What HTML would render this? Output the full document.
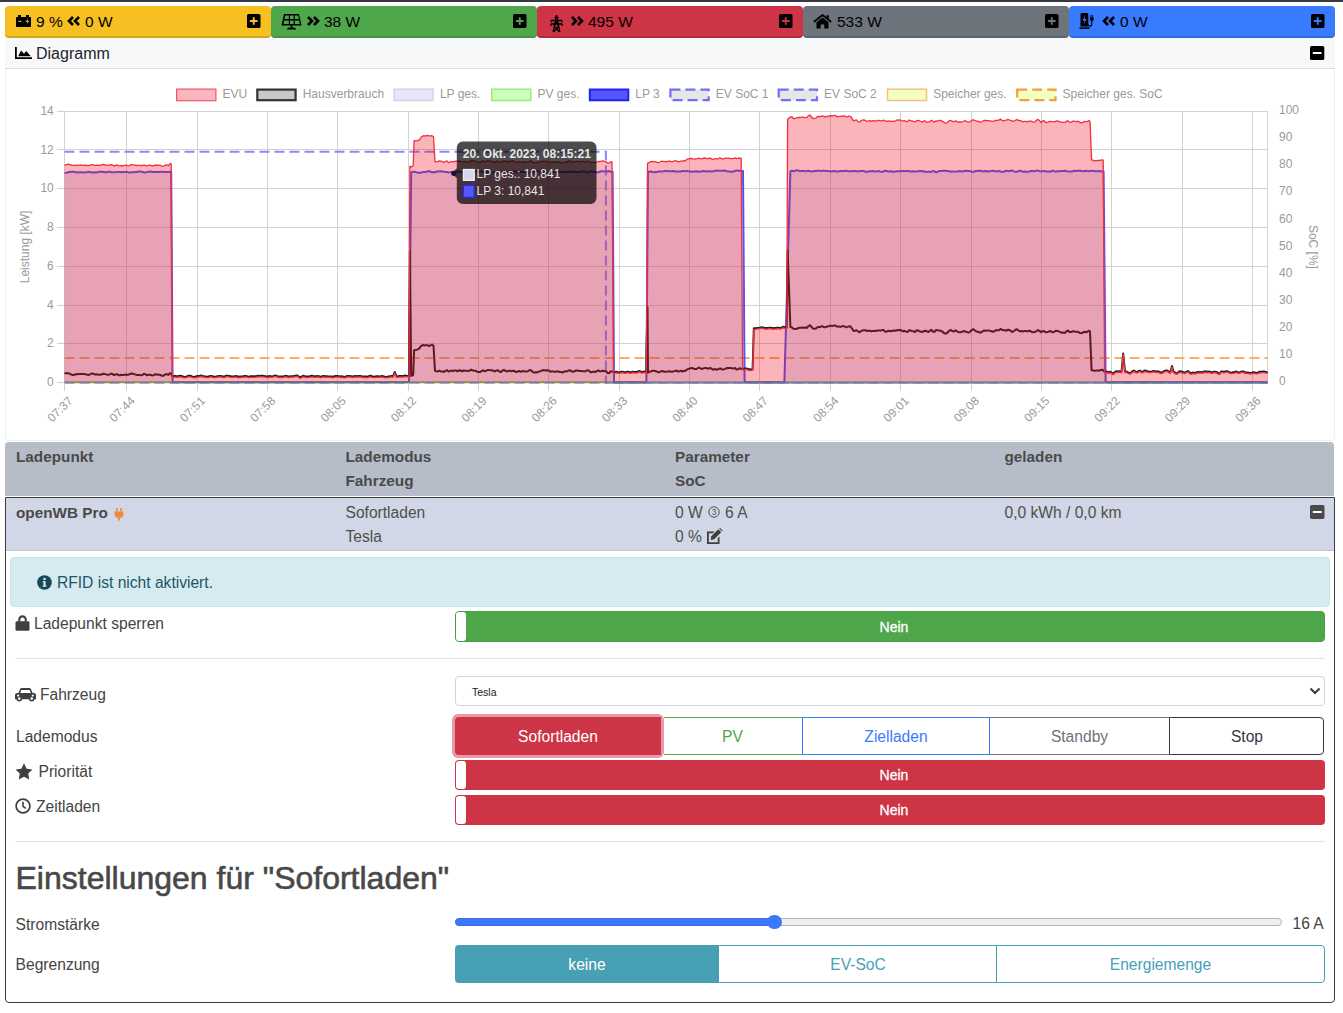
<!DOCTYPE html>
<html><head><meta charset="utf-8">
<style>
*{box-sizing:border-box;margin:0;padding:0}
html,body{width:1343px;height:1013px;overflow:hidden;background:#fff;font-family:"Liberation Sans",sans-serif;color:#212529}
.abs{position:absolute}
.topbar{position:absolute;left:0;top:0;width:1343px;height:2px;background:#343a40}
.sb{position:absolute;top:6px;height:32px;border-radius:4px;color:#000;font-size:15.5px;box-shadow:inset 0 -2px 0 rgba(0,0,0,0.13)}
.sb .t{position:absolute;top:7px;line-height:18px;white-space:nowrap}
.sb svg{position:absolute}
.card{position:absolute;left:5px;top:38px;width:1330px;height:401px;border:1px solid #e3e3e3;border-top:none;border-radius:0 0 4px 4px;background:#fff}
.cardh{position:absolute;left:5px;top:38px;width:1330px;height:31px;background:#f7f8fa;border-bottom:1px solid #dcdcdc}
.lbl{position:absolute;white-space:nowrap;font-size:15.6px;color:#444;line-height:18px}
.b{font-weight:bold;font-size:15.3px;color:#4a4a4a}
</style></head><body>
<div class="topbar"></div>
<div class="sb" style="left:5px;width:266px;background:#f6c022"></div>
<div class="sb" style="left:271px;width:266px;background:#4fa74b"></div>
<div class="sb" style="left:537px;width:266px;background:#cd3446"></div>
<div class="sb" style="left:803px;width:266px;background:#6d747c"></div>
<div class="sb" style="left:1069px;width:266px;background:#397bff"></div>
<!-- battery -->
<svg class="abs" style="left:16px;top:15px" width="16" height="12" viewBox="0 0 16 12"><path d="M2 0h3v2h5V0h3v2h1.2a0.8 0.8 0 0 1 .8.8V11.2a.8.8 0 0 1-.8.8H.8a.8.8 0 0 1-.8-.8V2.8A.8.8 0 0 1 .8 2H2z" fill="#000"/><rect x="2.2" y="5.8" width="3.3" height="1.2" fill="#c9a020"/><rect x="9.8" y="5.8" width="3.3" height="1.2" fill="#c9a020"/><rect x="10.85" y="4.6" width="1.2" height="3.6" fill="#c9a020"/></svg>
<div class="lbl" style="left:36px;top:13.1px;font-size:15.5px;color:#000">9 %</div>
<svg class="abs" style="left:67px;top:16px" width="14" height="10" viewBox="0 0 14 10"><path d="M6 1L2 5l4 4M12 1L8 5l4 4" fill="none" stroke="#000" stroke-width="2.6" stroke-linejoin="miter"/></svg>
<div class="lbl" style="left:85px;top:13.1px;font-size:15.5px;color:#000">0 W</div>
<!-- solar -->
<svg class="abs" style="left:281px;top:12.5px" width="21" height="17" viewBox="0 0 21 17"><path d="M3 1h15l2.5 11.5H0.5z" fill="#000"/><path d="M4.2 2.6h3.6v3.4H3.5zM9 2.6h3.6v3.4H9zM13.8 2.6h3.4l0.7 3.4h-4.1zM3.2 7.4h4.6v3.6H2.5zM9 7.4h3.6v3.6H9zM13.8 7.4h4.3l0.7 3.6h-5z" fill="#4fa74b"/><rect x="9.7" y="12" width="1.6" height="2.5" fill="#000"/><path d="M6 16.5a4.5 2.2 0 0 1 9 0z" fill="#000"/></svg>
<svg class="abs" style="left:306px;top:16px" width="14" height="10" viewBox="0 0 14 10"><path d="M2 1l4 4-4 4M8 1l4 4-4 4" fill="none" stroke="#000" stroke-width="2.6"/></svg>
<div class="lbl" style="left:324px;top:13.1px;font-size:15.5px;color:#000">38 W</div>
<!-- tower -->
<svg class="abs" style="left:550px;top:14px" width="13" height="19" viewBox="0 0 13 19"><path d="M6.5 1L3.2 18M6.5 1l3.3 17M1 6.5h11M0.8 10h11.4M4.6 6.5l4.2 5.5M8.4 6.5L4.2 12M4.2 12l5.2 6M8.8 12l-5.2 6M4.5 3.5h4" fill="none" stroke="#000" stroke-width="1.3"/><path d="M1 6.5v2M12 6.5v2M0.8 10v2M12.2 10v2" stroke="#000" stroke-width="1.1"/></svg>
<svg class="abs" style="left:570px;top:16px" width="14" height="10" viewBox="0 0 14 10"><path d="M2 1l4 4-4 4M8 1l4 4-4 4" fill="none" stroke="#000" stroke-width="2.6"/></svg>
<div class="lbl" style="left:588px;top:13.1px;font-size:15.5px;color:#000">495 W</div>
<!-- house -->
<svg class="abs" style="left:813px;top:13.5px" width="19" height="15" viewBox="0 0 19 15"><path d="M0.8 8L9.5 1l8.7 7" fill="none" stroke="#000" stroke-width="1.8"/><path d="M13.5 1.2h2.2v4.3l-2.2-1.8z" fill="#000"/><path d="M3.5 8.2L9.5 3.4l6 4.8V14.5h-4.2v-4h-3.6v4H3.5z" fill="#000"/></svg>
<div class="lbl" style="left:837px;top:13.1px;font-size:15.5px;color:#000">533 W</div>
<!-- charging station -->
<svg class="abs" style="left:1079px;top:13px" width="19" height="16" viewBox="0 0 19 16"><path d="M1.5 1.3a1.3 1.3 0 0 1 1.3-1.3h5.2a1.3 1.3 0 0 1 1.3 1.3V13.5H1.5z" fill="#000"/><rect x="0.5" y="14.3" width="10" height="1.6" fill="#000"/><path d="M6.2 2.2L3.4 7.4h2.2l-1 4 3-5.4H5.4z" fill="#397bff"/><path d="M9.3 11.5c0 2.2 3.5 2.2 3.5 0V8" fill="none" stroke="#000" stroke-width="1.1"/><path d="M11 4.2h3.6v2.2a1.8 1.8 0 0 1-3.6 0z" fill="#000"/><rect x="11.5" y="2" width="0.9" height="2.3" fill="#000"/><rect x="13.2" y="2" width="0.9" height="2.3" fill="#000"/></svg>
<svg class="abs" style="left:1102px;top:16px" width="14" height="10" viewBox="0 0 14 10"><path d="M6 1L2 5l4 4M12 1L8 5l4 4" fill="none" stroke="#000" stroke-width="2.6"/></svg>
<div class="lbl" style="left:1120px;top:13.1px;font-size:15.5px;color:#000">0 W</div>
<!-- plus squares -->
<svg class="abs" style="left:246.5px;top:14px" width="14" height="14" viewBox="0 0 14 14"><rect x="0" y="0" width="13.5" height="14" rx="1.6" fill="#000"/><path d="M6.75 3.2v7.6M2.9 7h7.7" stroke="#f6c022" stroke-width="1.9"/></svg>
<svg class="abs" style="left:512.5px;top:14px" width="14" height="14" viewBox="0 0 14 14"><rect x="0" y="0" width="13.5" height="14" rx="1.6" fill="#000"/><path d="M6.75 3.2v7.6M2.9 7h7.7" stroke="#4fa74b" stroke-width="1.9"/></svg>
<svg class="abs" style="left:778.5px;top:14px" width="14" height="14" viewBox="0 0 14 14"><rect x="0" y="0" width="13.5" height="14" rx="1.6" fill="#000"/><path d="M6.75 3.2v7.6M2.9 7h7.7" stroke="#cd3446" stroke-width="1.9"/></svg>
<svg class="abs" style="left:1044.5px;top:14px" width="14" height="14" viewBox="0 0 14 14"><rect x="0" y="0" width="13.5" height="14" rx="1.6" fill="#000"/><path d="M6.75 3.2v7.6M2.9 7h7.7" stroke="#6d747c" stroke-width="1.9"/></svg>
<svg class="abs" style="left:1310.5px;top:14px" width="14" height="14" viewBox="0 0 14 14"><rect x="0" y="0" width="13.5" height="14" rx="1.6" fill="#000"/><path d="M6.75 3.2v7.6M2.9 7h7.7" stroke="#397bff" stroke-width="1.9"/></svg>
<div class="abs" style="left:5px;top:38px;width:1330px;height:403px;border:1px solid #eef0f2;border-top:none;border-radius:0 0 4px 4px;background:#fff"></div>
<div class="abs" style="left:5px;top:38px;width:1330px;height:31px;background:#f7f8fa;border-bottom:1px solid #dadcde"></div>
<svg class="abs" style="left:15px;top:47px" width="17" height="12" viewBox="0 0 17 12"><path d="M0 0h1.8v10.2H17V12H0z" fill="#000"/><path d="M3.2 9.2L6 3.5l3 3.2 2.2-2.8L15.8 9.2z" fill="#000"/></svg>
<div class="lbl" style="left:36px;top:44.5px;font-size:16px;color:#212529">Diagramm</div>
<svg class="abs" style="left:1310px;top:46px" width="15" height="14" viewBox="0 0 15 14"><rect x="0" y="0" width="14.3" height="14" rx="1.6" fill="#000"/><rect x="2.8" y="6" width="8.7" height="2" fill="#fff"/></svg>
<svg class="abs" style="left:0;top:0" width="1343" height="440" viewBox="0 0 1343 440" font-family="Liberation Sans, sans-serif"><g shape-rendering="crispEdges"><rect x="57" y="111" width="1210.6" height="1" fill="#d2d2d2"/><rect x="57" y="149" width="1210.6" height="1" fill="#d2d2d2"/><rect x="57" y="188" width="1210.6" height="1" fill="#d2d2d2"/><rect x="57" y="227" width="1210.6" height="1" fill="#d2d2d2"/><rect x="57" y="266" width="1210.6" height="1" fill="#d2d2d2"/><rect x="57" y="305" width="1210.6" height="1" fill="#d2d2d2"/><rect x="57" y="343" width="1210.6" height="1" fill="#d2d2d2"/><rect x="57" y="382" width="1210.6" height="1" fill="#d2d2d2"/><line x1="64" y1="111.0" x2="64" y2="391" stroke="#d2d2d2" stroke-width="1"/><line x1="126" y1="111.0" x2="126" y2="391" stroke="#d2d2d2" stroke-width="1"/><line x1="197" y1="111.0" x2="197" y2="391" stroke="#d2d2d2" stroke-width="1"/><line x1="267" y1="111.0" x2="267" y2="391" stroke="#d2d2d2" stroke-width="1"/><line x1="337" y1="111.0" x2="337" y2="391" stroke="#d2d2d2" stroke-width="1"/><line x1="408" y1="111.0" x2="408" y2="391" stroke="#d2d2d2" stroke-width="1"/><line x1="478" y1="111.0" x2="478" y2="391" stroke="#d2d2d2" stroke-width="1"/><line x1="548" y1="111.0" x2="548" y2="391" stroke="#d2d2d2" stroke-width="1"/><line x1="619" y1="111.0" x2="619" y2="391" stroke="#d2d2d2" stroke-width="1"/><line x1="689" y1="111.0" x2="689" y2="391" stroke="#d2d2d2" stroke-width="1"/><line x1="759" y1="111.0" x2="759" y2="391" stroke="#d2d2d2" stroke-width="1"/><line x1="830" y1="111.0" x2="830" y2="391" stroke="#d2d2d2" stroke-width="1"/><line x1="900" y1="111.0" x2="900" y2="391" stroke="#d2d2d2" stroke-width="1"/><line x1="971" y1="111.0" x2="971" y2="391" stroke="#d2d2d2" stroke-width="1"/><line x1="1041" y1="111.0" x2="1041" y2="391" stroke="#d2d2d2" stroke-width="1"/><line x1="1111" y1="111.0" x2="1111" y2="391" stroke="#d2d2d2" stroke-width="1"/><line x1="1182" y1="111.0" x2="1182" y2="391" stroke="#d2d2d2" stroke-width="1"/><line x1="1252" y1="111.0" x2="1252" y2="391" stroke="#d2d2d2" stroke-width="1"/><line x1="1267" y1="111.3" x2="1267" y2="382.3" stroke="#d2d2d2" stroke-width="1"/></g><path d="M64.5 357.9 H1267.6" stroke="#f5b060" stroke-width="2" stroke-dasharray="10 5" fill="none"/><path d="M64.5 383.0 H1267.6" stroke="#f2e6a0" stroke-width="2" fill="none"/><path d="M64.5 383.0 H1267.6" stroke="#a8a0f0" stroke-width="2" stroke-dasharray="10 5" fill="none"/><path d="M64.5 151.8 H605.9 V383.0 H1267.6" stroke="#8888ff" stroke-width="2" stroke-dasharray="10 5" fill="none"/><path d="M64.5 172.9 L66.0 172.8 L67.5 172.6 L69.0 172.0 L70.5 171.9 L72.0 171.8 L73.5 171.7 L75.0 172.1 L76.5 172.3 L78.0 172.4 L79.5 172.3 L81.0 172.3 L82.5 172.5 L84.0 172.5 L85.5 172.3 L87.0 172.2 L88.5 172.0 L90.0 172.0 L91.5 172.4 L93.0 172.4 L94.5 172.2 L96.0 172.4 L97.5 172.2 L99.0 171.8 L100.5 171.8 L102.0 171.8 L103.5 171.9 L105.0 172.2 L106.5 172.2 L108.0 171.8 L109.5 171.8 L111.0 172.3 L112.5 172.3 L114.0 172.2 L115.5 172.2 L117.0 172.1 L118.5 171.9 L120.0 171.9 L121.5 172.2 L123.0 172.1 L124.5 172.0 L126.0 171.9 L127.5 172.1 L129.0 172.6 L130.5 172.5 L132.0 172.3 L133.5 172.3 L135.0 172.1 L136.5 171.9 L138.0 171.7 L139.5 171.6 L141.0 171.6 L142.5 171.9 L144.0 172.4 L145.5 172.5 L147.0 172.1 L148.5 171.8 L150.0 171.7 L151.5 171.6 L153.0 171.9 L154.5 172.0 L156.0 172.0 L157.5 172.0 L159.0 171.9 L160.5 171.7 L162.0 171.7 L163.5 172.0 L165.0 172.1 L166.5 172.0 L168.0 172.0 L168.5 172.0 L169.5 171.8 L169.8 171.7 L171.0 171.8 L171.2 171.8 L172.4 352.2 L172.5 367.3 L172.6 382.3 L174.0 382.3 L175.5 382.3 L177.0 382.3 L178.5 382.3 L180.0 382.3 L181.5 382.3 L183.0 382.3 L184.5 382.3 L186.0 382.3 L187.5 382.3 L189.0 382.3 L190.5 382.3 L192.0 382.3 L193.5 382.3 L195.0 382.3 L196.5 382.3 L198.0 382.3 L199.5 382.3 L201.0 382.3 L202.5 382.3 L204.0 382.3 L205.5 382.3 L207.0 382.3 L208.5 382.3 L210.0 382.3 L211.5 382.3 L213.0 382.3 L214.5 382.3 L216.0 382.3 L217.5 382.3 L219.0 382.3 L220.5 382.3 L222.0 382.3 L223.5 382.3 L225.0 382.3 L226.5 382.3 L228.0 382.3 L229.5 382.3 L231.0 382.3 L232.5 382.3 L234.0 382.3 L235.5 382.3 L237.0 382.3 L238.5 382.3 L240.0 382.3 L241.5 382.3 L243.0 382.3 L244.5 382.3 L246.0 382.3 L247.5 382.3 L249.0 382.3 L250.5 382.3 L252.0 382.3 L253.5 382.3 L255.0 382.3 L256.5 382.3 L258.0 382.3 L259.5 382.3 L261.0 382.3 L262.5 382.3 L264.0 382.3 L265.5 382.3 L267.0 382.3 L268.5 382.3 L270.0 382.3 L271.5 382.3 L273.0 382.3 L274.5 382.3 L276.0 382.3 L277.5 382.3 L279.0 382.3 L280.5 382.3 L282.0 382.3 L283.5 382.3 L285.0 382.3 L286.5 382.3 L288.0 382.3 L289.5 382.3 L291.0 382.3 L292.5 382.3 L294.0 382.3 L295.5 382.3 L297.0 382.3 L298.5 382.3 L300.0 382.3 L301.5 382.3 L303.0 382.3 L304.5 382.3 L306.0 382.3 L307.5 382.3 L309.0 382.3 L310.5 382.3 L312.0 382.3 L313.5 382.3 L315.0 382.3 L316.5 382.3 L318.0 382.3 L319.5 382.3 L321.0 382.3 L322.5 382.3 L324.0 382.3 L325.5 382.3 L327.0 382.3 L328.5 382.3 L330.0 382.3 L331.5 382.3 L333.0 382.3 L334.5 382.3 L336.0 382.3 L337.5 382.3 L339.0 382.3 L340.5 382.3 L342.0 382.3 L343.5 382.3 L345.0 382.3 L346.5 382.3 L348.0 382.3 L349.5 382.3 L351.0 382.3 L352.5 382.3 L354.0 382.3 L355.5 382.3 L357.0 382.3 L358.5 382.3 L360.0 382.3 L361.5 382.3 L363.0 382.3 L364.5 382.3 L366.0 382.3 L367.5 382.3 L369.0 382.3 L370.5 382.3 L372.0 382.3 L373.5 382.3 L375.0 382.3 L376.5 382.3 L378.0 382.3 L379.5 382.3 L381.0 382.3 L382.5 382.3 L384.0 382.3 L385.5 382.3 L387.0 382.3 L388.5 382.3 L390.0 382.3 L391.5 382.3 L393.0 382.3 L394.5 382.3 L394.7 382.3 L396.0 382.3 L396.4 382.3 L397.5 382.3 L399.0 382.3 L400.5 382.3 L402.0 382.3 L403.5 382.3 L405.0 382.3 L406.5 382.3 L408.0 382.3 L409.0 382.3 L409.5 334.5 L409.9 296.4 L411.0 191.3 L411.2 172.3 L412.5 172.1 L413.2 171.9 L414.0 171.6 L414.1 171.7 L415.5 172.0 L417.0 172.4 L418.5 172.7 L419.5 172.9 L420.0 172.8 L421.0 172.6 L421.5 172.5 L423.0 172.1 L423.5 172.1 L424.5 171.9 L426.0 172.0 L427.5 171.5 L429.0 171.0 L430.5 171.8 L432.0 172.4 L433.5 172.1 L435.0 172.3 L436.5 171.8 L438.0 171.3 L439.5 171.5 L441.0 171.2 L442.5 171.4 L444.0 171.9 L445.5 171.9 L447.0 172.0 L448.5 172.4 L450.0 172.3 L451.5 172.1 L453.0 172.0 L454.5 172.3 L456.0 172.0 L457.5 171.4 L459.0 171.8 L460.5 172.0 L462.0 172.1 L463.5 172.3 L465.0 172.1 L466.5 172.4 L468.0 172.4 L469.5 172.2 L471.0 172.2 L472.5 171.5 L474.0 171.4 L475.5 171.8 L477.0 171.6 L478.5 171.5 L480.0 171.5 L481.5 171.6 L483.0 171.9 L484.5 171.9 L486.0 172.0 L487.5 172.1 L489.0 172.0 L490.5 172.3 L492.0 172.5 L493.5 172.2 L495.0 172.3 L496.5 172.3 L498.0 172.1 L499.5 171.8 L501.0 171.4 L502.5 171.7 L504.0 172.2 L505.5 171.9 L507.0 172.0 L508.5 172.0 L510.0 171.6 L511.5 171.4 L513.0 171.4 L514.5 171.7 L516.0 171.5 L517.5 171.8 L519.0 172.1 L520.5 171.8 L522.0 172.1 L523.5 172.0 L525.0 171.8 L526.5 172.1 L528.0 172.4 L529.5 172.6 L531.0 171.8 L532.5 171.5 L534.0 171.7 L535.5 171.6 L537.0 171.5 L538.5 171.6 L540.0 171.9 L541.5 172.2 L543.0 172.3 L544.5 172.4 L546.0 172.4 L547.5 172.4 L549.0 172.4 L550.5 171.8 L552.0 171.6 L553.5 171.9 L555.0 172.1 L556.5 172.0 L558.0 171.7 L559.5 171.6 L561.0 171.8 L562.5 171.7 L564.0 172.1 L565.5 172.1 L567.0 172.0 L568.5 171.9 L570.0 171.8 L571.5 171.8 L573.0 171.6 L574.5 171.8 L576.0 172.1 L577.5 172.1 L579.0 172.0 L580.5 171.9 L582.0 171.5 L583.5 171.4 L585.0 171.7 L586.5 172.1 L588.0 172.4 L589.5 171.9 L591.0 171.2 L592.5 171.5 L594.0 171.9 L595.5 172.1 L597.0 172.4 L598.5 172.2 L600.0 171.7 L601.5 171.2 L603.0 171.3 L604.5 171.4 L606.0 171.7 L607.5 171.4 L609.0 171.1 L610.5 171.8 L612.0 171.8 L612.6 171.7 L613.5 307.1 L614.0 382.3 L615.0 382.3 L616.5 382.3 L618.0 382.3 L619.5 382.3 L621.0 382.3 L622.5 382.3 L624.0 382.3 L625.5 382.3 L627.0 382.3 L628.5 382.3 L630.0 382.3 L631.5 382.3 L633.0 382.3 L634.5 382.3 L636.0 382.3 L637.5 382.3 L639.0 382.3 L640.5 382.3 L642.0 382.3 L643.5 382.3 L645.0 382.3 L646.3 382.3 L646.4 382.3 L646.5 369.1 L647.5 237.4 L648.0 171.8 L649.5 171.8 L651.0 171.5 L652.5 172.0 L654.0 172.2 L655.5 172.0 L657.0 172.0 L658.5 171.5 L660.0 171.4 L661.5 171.5 L663.0 171.4 L664.5 171.1 L666.0 171.1 L667.5 171.3 L669.0 171.1 L670.5 171.2 L672.0 171.2 L673.5 171.1 L675.0 171.2 L676.5 171.7 L678.0 171.5 L679.5 171.6 L681.0 171.6 L682.5 170.9 L684.0 171.1 L685.5 171.2 L687.0 171.0 L687.5 171.1 L688.5 171.3 L690.0 171.4 L691.5 171.6 L693.0 171.9 L694.5 171.5 L696.0 171.2 L697.5 171.5 L699.0 171.9 L700.5 171.5 L702.0 171.3 L703.5 171.0 L705.0 171.2 L706.5 171.5 L708.0 171.2 L709.5 171.2 L711.0 171.5 L712.5 171.4 L714.0 171.1 L715.5 170.7 L717.0 170.6 L718.5 170.8 L720.0 170.8 L721.5 170.8 L723.0 170.8 L724.5 170.5 L726.0 170.9 L727.5 171.4 L729.0 171.6 L730.5 171.8 L732.0 171.7 L733.5 171.4 L735.0 171.1 L736.5 170.4 L738.0 170.6 L739.5 171.1 L741.0 170.9 L741.2 170.9 L742.5 171.0 L742.6 170.9 L743.0 171.0 L744.0 303.1 L744.6 382.3 L745.5 382.3 L747.0 382.3 L748.5 382.3 L750.0 382.3 L751.5 382.3 L752.6 382.3 L753.0 382.3 L753.8 382.3 L754.5 382.3 L756.0 382.3 L757.5 382.3 L759.0 382.3 L760.5 382.3 L762.0 382.3 L763.5 382.3 L765.0 382.3 L766.5 382.3 L768.0 382.3 L769.5 382.3 L771.0 382.3 L772.5 382.3 L774.0 382.3 L775.5 382.3 L777.0 382.3 L778.5 382.3 L780.0 382.3 L781.5 382.3 L783.0 382.3 L784.4 382.3 L784.5 378.8 L786.0 326.0 L786.8 297.9 L787.5 273.2 L787.6 269.7 L789.0 220.5 L790.4 171.3 L790.5 171.2 L792.0 170.8 L793.5 171.2 L795.0 170.9 L796.5 170.2 L798.0 170.6 L799.5 170.9 L801.0 170.9 L802.5 170.9 L804.0 171.1 L805.5 171.4 L807.0 170.9 L808.5 170.8 L810.0 171.2 L811.5 171.4 L813.0 171.2 L814.5 171.0 L816.0 170.9 L817.5 170.7 L819.0 170.7 L820.5 171.1 L822.0 171.0 L823.5 170.6 L825.0 170.9 L826.5 171.0 L828.0 171.0 L829.5 171.3 L831.0 171.4 L832.5 171.2 L834.0 171.1 L835.5 171.2 L837.0 171.5 L838.0 171.4 L838.5 171.5 L840.0 171.0 L841.5 171.0 L843.0 171.3 L844.5 170.9 L846.0 170.8 L847.5 171.1 L849.0 171.3 L850.5 171.3 L851.0 171.0 L852.0 171.2 L853.5 171.2 L855.0 171.1 L856.5 171.1 L858.0 171.5 L859.5 171.2 L861.0 171.0 L862.5 171.0 L864.0 171.1 L865.5 171.7 L867.0 171.8 L868.5 171.4 L870.0 171.2 L871.5 171.2 L873.0 171.1 L874.5 171.4 L876.0 171.4 L877.5 171.2 L879.0 171.1 L880.5 171.6 L882.0 172.0 L883.5 171.3 L885.0 170.8 L886.5 171.0 L888.0 171.5 L889.5 171.5 L891.0 171.3 L892.5 171.6 L894.0 171.9 L895.5 171.4 L897.0 171.2 L898.5 171.3 L900.0 171.3 L901.5 171.2 L903.0 171.1 L904.5 171.1 L906.0 171.3 L907.5 171.0 L909.0 171.1 L910.5 171.5 L912.0 171.4 L913.5 171.3 L915.0 171.4 L916.5 171.6 L918.0 171.3 L919.5 170.9 L921.0 171.1 L922.5 171.4 L924.0 171.2 L925.5 171.8 L927.0 172.0 L928.5 171.6 L930.0 171.9 L931.5 171.7 L933.0 171.0 L934.5 171.4 L936.0 172.3 L937.5 172.0 L939.0 171.0 L940.5 170.9 L942.0 171.0 L943.5 170.7 L945.0 170.7 L946.5 171.0 L948.0 171.1 L949.5 171.2 L951.0 171.8 L952.5 171.5 L954.0 171.6 L955.5 171.7 L957.0 171.5 L958.5 171.2 L960.0 170.9 L961.5 171.5 L963.0 171.5 L964.5 170.9 L966.0 170.8 L967.5 171.0 L969.0 170.9 L970.5 171.2 L972.0 171.9 L973.5 171.8 L975.0 171.2 L976.5 170.9 L978.0 170.9 L979.5 170.6 L981.0 171.0 L982.5 171.4 L984.0 171.2 L985.5 171.1 L987.0 171.3 L988.5 171.6 L990.0 171.2 L991.5 171.1 L993.0 170.8 L994.5 171.0 L996.0 171.5 L997.5 171.3 L999.0 171.0 L1000.5 171.5 L1002.0 171.8 L1003.5 171.9 L1005.0 171.3 L1006.5 170.8 L1008.0 171.0 L1009.5 171.2 L1011.0 170.7 L1012.5 170.6 L1014.0 171.4 L1015.5 171.7 L1017.0 171.8 L1018.5 171.2 L1020.0 170.6 L1021.5 171.3 L1023.0 171.7 L1024.5 171.5 L1026.0 171.7 L1027.5 171.8 L1029.0 171.6 L1030.5 171.3 L1032.0 170.8 L1033.5 171.2 L1035.0 171.3 L1036.5 170.6 L1038.0 170.6 L1039.5 171.2 L1041.0 171.5 L1042.5 171.1 L1044.0 170.9 L1045.5 171.4 L1047.0 171.5 L1048.5 171.6 L1050.0 171.7 L1051.5 171.1 L1053.0 170.6 L1054.5 171.4 L1056.0 171.7 L1057.5 171.1 L1059.0 171.3 L1060.5 171.3 L1062.0 170.9 L1063.5 170.9 L1065.0 170.8 L1066.5 171.1 L1068.0 171.6 L1069.5 171.4 L1071.0 171.6 L1072.5 171.4 L1074.0 170.8 L1075.5 171.0 L1077.0 171.0 L1078.5 170.6 L1080.0 170.7 L1081.5 171.0 L1083.0 171.2 L1084.5 170.9 L1086.0 170.7 L1087.5 171.1 L1089.0 171.2 L1090.0 171.1 L1090.5 171.1 L1091.6 170.9 L1092.0 170.8 L1093.5 171.0 L1095.0 171.3 L1096.5 171.3 L1098.0 171.3 L1099.5 171.1 L1101.0 171.4 L1102.5 171.5 L1103.2 171.4 L1103.6 171.2 L1104.0 213.4 L1104.6 276.8 L1105.5 371.7 L1105.6 382.3 L1107.0 382.3 L1108.5 382.3 L1110.0 382.3 L1111.5 382.3 L1113.0 382.3 L1114.5 382.3 L1116.0 382.3 L1117.5 382.3 L1119.0 382.3 L1120.5 382.3 L1121.5 382.3 L1122.0 382.3 L1123.2 382.3 L1123.5 382.3 L1125.0 382.3 L1126.5 382.3 L1128.0 382.3 L1129.5 382.3 L1131.0 382.3 L1132.5 382.3 L1134.0 382.3 L1135.5 382.3 L1137.0 382.3 L1138.5 382.3 L1140.0 382.3 L1141.5 382.3 L1143.0 382.3 L1144.5 382.3 L1146.0 382.3 L1147.5 382.3 L1149.0 382.3 L1150.5 382.3 L1152.0 382.3 L1153.5 382.3 L1155.0 382.3 L1156.5 382.3 L1158.0 382.3 L1159.5 382.3 L1161.0 382.3 L1162.5 382.3 L1164.0 382.3 L1165.5 382.3 L1167.0 382.3 L1168.5 382.3 L1170.0 382.3 L1170.5 382.3 L1171.5 382.3 L1172.0 382.3 L1173.0 382.3 L1173.5 382.3 L1174.5 382.3 L1176.0 382.3 L1177.5 382.3 L1179.0 382.3 L1180.5 382.3 L1182.0 382.3 L1183.5 382.3 L1185.0 382.3 L1186.5 382.3 L1188.0 382.3 L1189.5 382.3 L1191.0 382.3 L1192.5 382.3 L1194.0 382.3 L1195.5 382.3 L1197.0 382.3 L1198.5 382.3 L1200.0 382.3 L1201.5 382.3 L1203.0 382.3 L1204.5 382.3 L1206.0 382.3 L1207.5 382.3 L1209.0 382.3 L1210.5 382.3 L1212.0 382.3 L1213.5 382.3 L1215.0 382.3 L1216.5 382.3 L1218.0 382.3 L1219.5 382.3 L1221.0 382.3 L1222.5 382.3 L1224.0 382.3 L1225.5 382.3 L1227.0 382.3 L1228.5 382.3 L1230.0 382.3 L1231.5 382.3 L1233.0 382.3 L1234.5 382.3 L1236.0 382.3 L1237.5 382.3 L1239.0 382.3 L1240.5 382.3 L1242.0 382.3 L1243.5 382.3 L1245.0 382.3 L1246.5 382.3 L1248.0 382.3 L1249.5 382.3 L1251.0 382.3 L1252.5 382.3 L1254.0 382.3 L1255.5 382.3 L1257.0 382.3 L1258.5 382.3 L1260.0 382.3 L1261.5 382.3 L1263.0 382.3 L1264.5 382.3 L1266.0 382.3 L1267.5 382.3 L1267.6 382.3" stroke="#5050f0" stroke-width="2" fill="none" stroke-linejoin="round"/><path d="M64.5 382.2 H1267.6" stroke="#4a9a3a" stroke-width="1.3" fill="none"/><path d="M64.5 172.9 L66.0 172.8 L67.5 172.6 L69.0 172.0 L70.5 171.9 L72.0 171.8 L73.5 171.7 L75.0 172.1 L76.5 172.3 L78.0 172.4 L79.5 172.3 L81.0 172.3 L82.5 172.5 L84.0 172.5 L85.5 172.3 L87.0 172.2 L88.5 172.0 L90.0 172.0 L91.5 172.4 L93.0 172.4 L94.5 172.2 L96.0 172.4 L97.5 172.2 L99.0 171.8 L100.5 171.8 L102.0 171.8 L103.5 171.9 L105.0 172.2 L106.5 172.2 L108.0 171.8 L109.5 171.8 L111.0 172.3 L112.5 172.3 L114.0 172.2 L115.5 172.2 L117.0 172.1 L118.5 171.9 L120.0 171.9 L121.5 172.2 L123.0 172.1 L124.5 172.0 L126.0 171.9 L127.5 172.1 L129.0 172.6 L130.5 172.5 L132.0 172.3 L133.5 172.3 L135.0 172.1 L136.5 171.9 L138.0 171.7 L139.5 171.6 L141.0 171.6 L142.5 171.9 L144.0 172.4 L145.5 172.5 L147.0 172.1 L148.5 171.8 L150.0 171.7 L151.5 171.6 L153.0 171.9 L154.5 172.0 L156.0 172.0 L157.5 172.0 L159.0 171.9 L160.5 171.7 L162.0 171.7 L163.5 172.0 L165.0 172.1 L166.5 172.0 L168.0 172.0 L168.5 172.0 L169.5 171.8 L169.8 171.7 L171.0 171.8 L171.2 171.8 L172.4 352.2 L172.5 367.3 L172.6 382.3 L174.0 382.3 L175.5 382.3 L177.0 382.3 L178.5 382.3 L180.0 382.3 L181.5 382.3 L183.0 382.3 L184.5 382.3 L186.0 382.3 L187.5 382.3 L189.0 382.3 L190.5 382.3 L192.0 382.3 L193.5 382.3 L195.0 382.3 L196.5 382.3 L198.0 382.3 L199.5 382.3 L201.0 382.3 L202.5 382.3 L204.0 382.3 L205.5 382.3 L207.0 382.3 L208.5 382.3 L210.0 382.3 L211.5 382.3 L213.0 382.3 L214.5 382.3 L216.0 382.3 L217.5 382.3 L219.0 382.3 L220.5 382.3 L222.0 382.3 L223.5 382.3 L225.0 382.3 L226.5 382.3 L228.0 382.3 L229.5 382.3 L231.0 382.3 L232.5 382.3 L234.0 382.3 L235.5 382.3 L237.0 382.3 L238.5 382.3 L240.0 382.3 L241.5 382.3 L243.0 382.3 L244.5 382.3 L246.0 382.3 L247.5 382.3 L249.0 382.3 L250.5 382.3 L252.0 382.3 L253.5 382.3 L255.0 382.3 L256.5 382.3 L258.0 382.3 L259.5 382.3 L261.0 382.3 L262.5 382.3 L264.0 382.3 L265.5 382.3 L267.0 382.3 L268.5 382.3 L270.0 382.3 L271.5 382.3 L273.0 382.3 L274.5 382.3 L276.0 382.3 L277.5 382.3 L279.0 382.3 L280.5 382.3 L282.0 382.3 L283.5 382.3 L285.0 382.3 L286.5 382.3 L288.0 382.3 L289.5 382.3 L291.0 382.3 L292.5 382.3 L294.0 382.3 L295.5 382.3 L297.0 382.3 L298.5 382.3 L300.0 382.3 L301.5 382.3 L303.0 382.3 L304.5 382.3 L306.0 382.3 L307.5 382.3 L309.0 382.3 L310.5 382.3 L312.0 382.3 L313.5 382.3 L315.0 382.3 L316.5 382.3 L318.0 382.3 L319.5 382.3 L321.0 382.3 L322.5 382.3 L324.0 382.3 L325.5 382.3 L327.0 382.3 L328.5 382.3 L330.0 382.3 L331.5 382.3 L333.0 382.3 L334.5 382.3 L336.0 382.3 L337.5 382.3 L339.0 382.3 L340.5 382.3 L342.0 382.3 L343.5 382.3 L345.0 382.3 L346.5 382.3 L348.0 382.3 L349.5 382.3 L351.0 382.3 L352.5 382.3 L354.0 382.3 L355.5 382.3 L357.0 382.3 L358.5 382.3 L360.0 382.3 L361.5 382.3 L363.0 382.3 L364.5 382.3 L366.0 382.3 L367.5 382.3 L369.0 382.3 L370.5 382.3 L372.0 382.3 L373.5 382.3 L375.0 382.3 L376.5 382.3 L378.0 382.3 L379.5 382.3 L381.0 382.3 L382.5 382.3 L384.0 382.3 L385.5 382.3 L387.0 382.3 L388.5 382.3 L390.0 382.3 L391.5 382.3 L393.0 382.3 L394.5 382.3 L394.7 382.3 L396.0 382.3 L396.4 382.3 L397.5 382.3 L399.0 382.3 L400.5 382.3 L402.0 382.3 L403.5 382.3 L405.0 382.3 L406.5 382.3 L408.0 382.3 L409.0 382.3 L409.5 334.5 L409.9 296.4 L411.0 191.3 L411.2 172.3 L412.5 172.1 L413.2 171.9 L414.0 171.6 L414.1 171.7 L415.5 172.0 L417.0 172.4 L418.5 172.7 L419.5 172.9 L420.0 172.8 L421.0 172.6 L421.5 172.5 L423.0 172.1 L423.5 172.1 L424.5 171.9 L426.0 172.0 L427.5 171.5 L429.0 171.0 L430.5 171.8 L432.0 172.4 L433.5 172.1 L435.0 172.3 L436.5 171.8 L438.0 171.3 L439.5 171.5 L441.0 171.2 L442.5 171.4 L444.0 171.9 L445.5 171.9 L447.0 172.0 L448.5 172.4 L450.0 172.3 L451.5 172.1 L453.0 172.0 L454.5 172.3 L456.0 172.0 L457.5 171.4 L459.0 171.8 L460.5 172.0 L462.0 172.1 L463.5 172.3 L465.0 172.1 L466.5 172.4 L468.0 172.4 L469.5 172.2 L471.0 172.2 L472.5 171.5 L474.0 171.4 L475.5 171.8 L477.0 171.6 L478.5 171.5 L480.0 171.5 L481.5 171.6 L483.0 171.9 L484.5 171.9 L486.0 172.0 L487.5 172.1 L489.0 172.0 L490.5 172.3 L492.0 172.5 L493.5 172.2 L495.0 172.3 L496.5 172.3 L498.0 172.1 L499.5 171.8 L501.0 171.4 L502.5 171.7 L504.0 172.2 L505.5 171.9 L507.0 172.0 L508.5 172.0 L510.0 171.6 L511.5 171.4 L513.0 171.4 L514.5 171.7 L516.0 171.5 L517.5 171.8 L519.0 172.1 L520.5 171.8 L522.0 172.1 L523.5 172.0 L525.0 171.8 L526.5 172.1 L528.0 172.4 L529.5 172.6 L531.0 171.8 L532.5 171.5 L534.0 171.7 L535.5 171.6 L537.0 171.5 L538.5 171.6 L540.0 171.9 L541.5 172.2 L543.0 172.3 L544.5 172.4 L546.0 172.4 L547.5 172.4 L549.0 172.4 L550.5 171.8 L552.0 171.6 L553.5 171.9 L555.0 172.1 L556.5 172.0 L558.0 171.7 L559.5 171.6 L561.0 171.8 L562.5 171.7 L564.0 172.1 L565.5 172.1 L567.0 172.0 L568.5 171.9 L570.0 171.8 L571.5 171.8 L573.0 171.6 L574.5 171.8 L576.0 172.1 L577.5 172.1 L579.0 172.0 L580.5 171.9 L582.0 171.5 L583.5 171.4 L585.0 171.7 L586.5 172.1 L588.0 172.4 L589.5 171.9 L591.0 171.2 L592.5 171.5 L594.0 171.9 L595.5 172.1 L597.0 172.4 L598.5 172.2 L600.0 171.7 L601.5 171.2 L603.0 171.3 L604.5 171.4 L606.0 171.7 L607.5 171.4 L609.0 171.1 L610.5 171.8 L612.0 171.8 L612.6 171.7 L613.5 307.1 L614.0 382.3 L615.0 382.3 L616.5 382.3 L618.0 382.3 L619.5 382.3 L621.0 382.3 L622.5 382.3 L624.0 382.3 L625.5 382.3 L627.0 382.3 L628.5 382.3 L630.0 382.3 L631.5 382.3 L633.0 382.3 L634.5 382.3 L636.0 382.3 L637.5 382.3 L639.0 382.3 L640.5 382.3 L642.0 382.3 L643.5 382.3 L645.0 382.3 L646.3 382.3 L646.4 382.3 L646.5 369.1 L647.5 237.4 L648.0 171.8 L649.5 171.8 L651.0 171.5 L652.5 172.0 L654.0 172.2 L655.5 172.0 L657.0 172.0 L658.5 171.5 L660.0 171.4 L661.5 171.5 L663.0 171.4 L664.5 171.1 L666.0 171.1 L667.5 171.3 L669.0 171.1 L670.5 171.2 L672.0 171.2 L673.5 171.1 L675.0 171.2 L676.5 171.7 L678.0 171.5 L679.5 171.6 L681.0 171.6 L682.5 170.9 L684.0 171.1 L685.5 171.2 L687.0 171.0 L687.5 171.1 L688.5 171.3 L690.0 171.4 L691.5 171.6 L693.0 171.9 L694.5 171.5 L696.0 171.2 L697.5 171.5 L699.0 171.9 L700.5 171.5 L702.0 171.3 L703.5 171.0 L705.0 171.2 L706.5 171.5 L708.0 171.2 L709.5 171.2 L711.0 171.5 L712.5 171.4 L714.0 171.1 L715.5 170.7 L717.0 170.6 L718.5 170.8 L720.0 170.8 L721.5 170.8 L723.0 170.8 L724.5 170.5 L726.0 170.9 L727.5 171.4 L729.0 171.6 L730.5 171.8 L732.0 171.7 L733.5 171.4 L735.0 171.1 L736.5 170.4 L738.0 170.6 L739.5 171.1 L741.0 170.9 L741.2 170.9 L742.5 171.0 L742.6 170.9 L743.0 171.0 L744.0 303.1 L744.6 382.3 L745.5 382.3 L747.0 382.3 L748.5 382.3 L750.0 382.3 L751.5 382.3 L752.6 382.3 L753.0 382.3 L753.8 382.3 L754.5 382.3 L756.0 382.3 L757.5 382.3 L759.0 382.3 L760.5 382.3 L762.0 382.3 L763.5 382.3 L765.0 382.3 L766.5 382.3 L768.0 382.3 L769.5 382.3 L771.0 382.3 L772.5 382.3 L774.0 382.3 L775.5 382.3 L777.0 382.3 L778.5 382.3 L780.0 382.3 L781.5 382.3 L783.0 382.3 L784.4 382.3 L784.5 378.8 L786.0 326.0 L786.8 297.9 L787.5 273.2 L787.6 269.7 L789.0 220.5 L790.4 171.3 L790.5 171.2 L792.0 170.8 L793.5 171.2 L795.0 170.9 L796.5 170.2 L798.0 170.6 L799.5 170.9 L801.0 170.9 L802.5 170.9 L804.0 171.1 L805.5 171.4 L807.0 170.9 L808.5 170.8 L810.0 171.2 L811.5 171.4 L813.0 171.2 L814.5 171.0 L816.0 170.9 L817.5 170.7 L819.0 170.7 L820.5 171.1 L822.0 171.0 L823.5 170.6 L825.0 170.9 L826.5 171.0 L828.0 171.0 L829.5 171.3 L831.0 171.4 L832.5 171.2 L834.0 171.1 L835.5 171.2 L837.0 171.5 L838.0 171.4 L838.5 171.5 L840.0 171.0 L841.5 171.0 L843.0 171.3 L844.5 170.9 L846.0 170.8 L847.5 171.1 L849.0 171.3 L850.5 171.3 L851.0 171.0 L852.0 171.2 L853.5 171.2 L855.0 171.1 L856.5 171.1 L858.0 171.5 L859.5 171.2 L861.0 171.0 L862.5 171.0 L864.0 171.1 L865.5 171.7 L867.0 171.8 L868.5 171.4 L870.0 171.2 L871.5 171.2 L873.0 171.1 L874.5 171.4 L876.0 171.4 L877.5 171.2 L879.0 171.1 L880.5 171.6 L882.0 172.0 L883.5 171.3 L885.0 170.8 L886.5 171.0 L888.0 171.5 L889.5 171.5 L891.0 171.3 L892.5 171.6 L894.0 171.9 L895.5 171.4 L897.0 171.2 L898.5 171.3 L900.0 171.3 L901.5 171.2 L903.0 171.1 L904.5 171.1 L906.0 171.3 L907.5 171.0 L909.0 171.1 L910.5 171.5 L912.0 171.4 L913.5 171.3 L915.0 171.4 L916.5 171.6 L918.0 171.3 L919.5 170.9 L921.0 171.1 L922.5 171.4 L924.0 171.2 L925.5 171.8 L927.0 172.0 L928.5 171.6 L930.0 171.9 L931.5 171.7 L933.0 171.0 L934.5 171.4 L936.0 172.3 L937.5 172.0 L939.0 171.0 L940.5 170.9 L942.0 171.0 L943.5 170.7 L945.0 170.7 L946.5 171.0 L948.0 171.1 L949.5 171.2 L951.0 171.8 L952.5 171.5 L954.0 171.6 L955.5 171.7 L957.0 171.5 L958.5 171.2 L960.0 170.9 L961.5 171.5 L963.0 171.5 L964.5 170.9 L966.0 170.8 L967.5 171.0 L969.0 170.9 L970.5 171.2 L972.0 171.9 L973.5 171.8 L975.0 171.2 L976.5 170.9 L978.0 170.9 L979.5 170.6 L981.0 171.0 L982.5 171.4 L984.0 171.2 L985.5 171.1 L987.0 171.3 L988.5 171.6 L990.0 171.2 L991.5 171.1 L993.0 170.8 L994.5 171.0 L996.0 171.5 L997.5 171.3 L999.0 171.0 L1000.5 171.5 L1002.0 171.8 L1003.5 171.9 L1005.0 171.3 L1006.5 170.8 L1008.0 171.0 L1009.5 171.2 L1011.0 170.7 L1012.5 170.6 L1014.0 171.4 L1015.5 171.7 L1017.0 171.8 L1018.5 171.2 L1020.0 170.6 L1021.5 171.3 L1023.0 171.7 L1024.5 171.5 L1026.0 171.7 L1027.5 171.8 L1029.0 171.6 L1030.5 171.3 L1032.0 170.8 L1033.5 171.2 L1035.0 171.3 L1036.5 170.6 L1038.0 170.6 L1039.5 171.2 L1041.0 171.5 L1042.5 171.1 L1044.0 170.9 L1045.5 171.4 L1047.0 171.5 L1048.5 171.6 L1050.0 171.7 L1051.5 171.1 L1053.0 170.6 L1054.5 171.4 L1056.0 171.7 L1057.5 171.1 L1059.0 171.3 L1060.5 171.3 L1062.0 170.9 L1063.5 170.9 L1065.0 170.8 L1066.5 171.1 L1068.0 171.6 L1069.5 171.4 L1071.0 171.6 L1072.5 171.4 L1074.0 170.8 L1075.5 171.0 L1077.0 171.0 L1078.5 170.6 L1080.0 170.7 L1081.5 171.0 L1083.0 171.2 L1084.5 170.9 L1086.0 170.7 L1087.5 171.1 L1089.0 171.2 L1090.0 171.1 L1090.5 171.1 L1091.6 170.9 L1092.0 170.8 L1093.5 171.0 L1095.0 171.3 L1096.5 171.3 L1098.0 171.3 L1099.5 171.1 L1101.0 171.4 L1102.5 171.5 L1103.2 171.4 L1103.6 171.2 L1104.0 213.4 L1104.6 276.8 L1105.5 371.7 L1105.6 382.3 L1107.0 382.3 L1108.5 382.3 L1110.0 382.3 L1111.5 382.3 L1113.0 382.3 L1114.5 382.3 L1116.0 382.3 L1117.5 382.3 L1119.0 382.3 L1120.5 382.3 L1121.5 382.3 L1122.0 382.3 L1123.2 382.3 L1123.5 382.3 L1125.0 382.3 L1126.5 382.3 L1128.0 382.3 L1129.5 382.3 L1131.0 382.3 L1132.5 382.3 L1134.0 382.3 L1135.5 382.3 L1137.0 382.3 L1138.5 382.3 L1140.0 382.3 L1141.5 382.3 L1143.0 382.3 L1144.5 382.3 L1146.0 382.3 L1147.5 382.3 L1149.0 382.3 L1150.5 382.3 L1152.0 382.3 L1153.5 382.3 L1155.0 382.3 L1156.5 382.3 L1158.0 382.3 L1159.5 382.3 L1161.0 382.3 L1162.5 382.3 L1164.0 382.3 L1165.5 382.3 L1167.0 382.3 L1168.5 382.3 L1170.0 382.3 L1170.5 382.3 L1171.5 382.3 L1172.0 382.3 L1173.0 382.3 L1173.5 382.3 L1174.5 382.3 L1176.0 382.3 L1177.5 382.3 L1179.0 382.3 L1180.5 382.3 L1182.0 382.3 L1183.5 382.3 L1185.0 382.3 L1186.5 382.3 L1188.0 382.3 L1189.5 382.3 L1191.0 382.3 L1192.5 382.3 L1194.0 382.3 L1195.5 382.3 L1197.0 382.3 L1198.5 382.3 L1200.0 382.3 L1201.5 382.3 L1203.0 382.3 L1204.5 382.3 L1206.0 382.3 L1207.5 382.3 L1209.0 382.3 L1210.5 382.3 L1212.0 382.3 L1213.5 382.3 L1215.0 382.3 L1216.5 382.3 L1218.0 382.3 L1219.5 382.3 L1221.0 382.3 L1222.5 382.3 L1224.0 382.3 L1225.5 382.3 L1227.0 382.3 L1228.5 382.3 L1230.0 382.3 L1231.5 382.3 L1233.0 382.3 L1234.5 382.3 L1236.0 382.3 L1237.5 382.3 L1239.0 382.3 L1240.5 382.3 L1242.0 382.3 L1243.5 382.3 L1245.0 382.3 L1246.5 382.3 L1248.0 382.3 L1249.5 382.3 L1251.0 382.3 L1252.5 382.3 L1254.0 382.3 L1255.5 382.3 L1257.0 382.3 L1258.5 382.3 L1260.0 382.3 L1261.5 382.3 L1263.0 382.3 L1264.5 382.3 L1266.0 382.3 L1267.5 382.3 L1267.6 382.3 L1267.6 382.3 L64.5 382.3 Z" fill="rgba(120,136,222,0.2)"/><path d="M64.5 373.2 L66.0 373.3 L67.5 373.1 L69.0 373.5 L70.5 374.1 L72.0 374.9 L73.5 375.0 L75.0 374.5 L76.5 374.1 L78.0 374.2 L79.5 374.1 L81.0 374.0 L82.5 374.1 L84.0 374.1 L85.5 374.2 L87.0 374.6 L88.5 375.0 L90.0 374.4 L91.5 373.6 L93.0 373.6 L94.5 374.4 L96.0 374.2 L97.5 374.4 L99.0 374.8 L100.5 374.7 L102.0 374.2 L103.5 373.7 L105.0 374.1 L106.5 374.5 L108.0 374.7 L109.5 374.5 L111.0 373.6 L112.5 373.9 L114.0 375.1 L115.5 374.5 L117.0 374.1 L118.5 375.2 L120.0 375.3 L121.5 374.7 L123.0 375.1 L124.5 374.7 L126.0 374.5 L127.5 374.9 L129.0 374.5 L130.5 373.7 L132.0 373.5 L133.5 374.0 L135.0 374.4 L136.5 374.9 L138.0 375.0 L139.5 375.0 L141.0 375.4 L142.5 374.9 L144.0 373.8 L145.5 374.4 L147.0 375.3 L148.5 374.8 L150.0 374.7 L151.5 375.3 L153.0 375.5 L154.5 374.6 L156.0 374.3 L157.5 374.7 L159.0 374.6 L160.5 375.0 L162.0 375.8 L163.5 375.7 L165.0 374.4 L166.5 374.1 L168.0 374.7 L168.5 374.9 L169.5 373.5 L169.8 373.2 L171.0 373.4 L171.2 373.4 L172.4 376.7 L172.5 376.7 L172.6 376.6 L174.0 376.1 L175.5 376.1 L177.0 376.4 L178.5 376.0 L180.0 375.8 L181.5 376.0 L183.0 376.5 L184.5 376.9 L186.0 376.7 L187.5 376.1 L189.0 375.8 L190.5 375.8 L192.0 376.4 L193.5 376.9 L195.0 376.8 L196.5 376.3 L198.0 376.1 L199.5 375.9 L201.0 375.5 L202.5 375.9 L204.0 376.2 L205.5 376.5 L207.0 376.7 L208.5 376.6 L210.0 376.0 L211.5 375.9 L213.0 376.6 L214.5 376.7 L216.0 376.7 L217.5 376.2 L219.0 375.9 L220.5 376.0 L222.0 376.2 L223.5 376.7 L225.0 376.3 L226.5 375.7 L228.0 375.7 L229.5 376.1 L231.0 376.3 L232.5 376.4 L234.0 376.4 L235.5 376.0 L237.0 376.3 L238.5 376.8 L240.0 376.5 L241.5 376.4 L243.0 376.3 L244.5 376.1 L246.0 375.9 L247.5 376.4 L249.0 376.7 L250.5 376.3 L252.0 376.3 L253.5 376.3 L255.0 376.3 L256.5 376.1 L258.0 375.8 L259.5 375.9 L261.0 375.8 L262.5 375.8 L264.0 376.0 L265.5 376.2 L267.0 376.6 L268.5 376.3 L270.0 376.1 L271.5 376.4 L273.0 376.2 L274.5 375.7 L276.0 375.6 L277.5 376.2 L279.0 376.5 L280.5 376.5 L282.0 376.6 L283.5 376.4 L285.0 375.9 L286.5 375.8 L288.0 376.5 L289.5 376.5 L291.0 376.2 L292.5 376.2 L294.0 376.1 L295.5 375.7 L297.0 375.5 L298.5 376.3 L300.0 377.3 L301.5 376.8 L303.0 375.8 L304.5 376.1 L306.0 376.6 L307.5 376.6 L309.0 376.4 L310.5 376.1 L312.0 375.8 L313.5 376.2 L315.0 376.3 L316.5 376.2 L318.0 376.0 L319.5 376.4 L321.0 376.8 L322.5 376.1 L324.0 376.1 L325.5 376.3 L327.0 376.2 L328.5 376.4 L330.0 376.4 L331.5 376.5 L333.0 376.8 L334.5 376.3 L336.0 376.1 L337.5 376.1 L339.0 376.2 L340.5 376.5 L342.0 376.3 L343.5 376.7 L345.0 376.9 L346.5 376.2 L348.0 375.9 L349.5 376.0 L351.0 376.2 L352.5 376.5 L354.0 376.2 L355.5 376.1 L357.0 376.2 L358.5 376.0 L360.0 376.0 L361.5 376.2 L363.0 376.6 L364.5 376.5 L366.0 376.6 L367.5 376.8 L369.0 376.2 L370.5 375.8 L372.0 376.3 L373.5 376.7 L375.0 376.6 L376.5 376.3 L378.0 376.3 L379.5 376.4 L381.0 376.2 L382.5 376.0 L384.0 376.6 L385.5 376.9 L387.0 376.8 L388.5 376.6 L390.0 376.2 L391.5 376.0 L393.0 376.3 L394.5 372.5 L394.7 372.0 L396.0 375.2 L396.4 376.3 L397.5 376.4 L399.0 376.1 L400.5 375.9 L402.0 376.1 L403.5 375.9 L405.0 375.6 L406.5 375.8 L408.0 375.9 L409.0 376.0 L409.5 306.4 L409.9 251.1 L411.0 357.0 L411.2 375.9 L412.5 375.6 L413.2 374.8 L414.0 353.1 L414.1 350.3 L415.5 350.1 L417.0 349.7 L418.5 348.8 L419.5 348.4 L420.0 347.5 L421.0 345.9 L421.5 345.7 L423.0 345.2 L423.5 344.8 L424.5 345.4 L426.0 345.2 L427.5 345.2 L429.0 346.1 L430.5 345.4 L432.0 344.5 L433.5 345.7 L435.0 370.8 L436.5 371.4 L438.0 371.3 L439.5 370.8 L441.0 371.4 L442.5 371.6 L444.0 371.9 L445.5 370.9 L447.0 370.1 L448.5 371.5 L450.0 371.2 L451.5 370.5 L453.0 371.2 L454.5 370.5 L456.0 370.4 L457.5 371.3 L459.0 370.3 L460.5 370.5 L462.0 371.3 L463.5 370.5 L465.0 370.8 L466.5 370.8 L468.0 371.0 L469.5 370.8 L471.0 369.6 L472.5 370.3 L474.0 370.8 L475.5 370.7 L477.0 371.7 L478.5 372.0 L480.0 372.1 L481.5 371.2 L483.0 370.3 L484.5 371.2 L486.0 370.9 L487.5 370.0 L489.0 370.1 L490.5 370.2 L492.0 370.2 L493.5 371.0 L495.0 371.4 L496.5 370.4 L498.0 370.3 L499.5 371.8 L501.0 372.0 L502.5 370.5 L504.0 369.9 L505.5 370.8 L507.0 371.5 L508.5 370.8 L510.0 370.8 L511.5 371.2 L513.0 370.8 L514.5 370.9 L516.0 372.1 L517.5 371.7 L519.0 371.0 L520.5 371.7 L522.0 371.3 L523.5 371.1 L525.0 371.5 L526.5 371.6 L528.0 371.2 L529.5 370.2 L531.0 370.3 L532.5 371.8 L534.0 372.6 L535.5 372.2 L537.0 372.4 L538.5 371.8 L540.0 371.4 L541.5 370.8 L543.0 370.1 L544.5 370.3 L546.0 370.5 L547.5 370.2 L549.0 370.7 L550.5 371.7 L552.0 371.5 L553.5 371.5 L555.0 371.9 L556.5 371.4 L558.0 371.3 L559.5 372.0 L561.0 372.0 L562.5 372.6 L564.0 371.7 L565.5 371.1 L567.0 371.5 L568.5 370.5 L570.0 370.3 L571.5 371.2 L573.0 371.7 L574.5 371.3 L576.0 370.5 L577.5 370.5 L579.0 371.0 L580.5 371.1 L582.0 371.0 L583.5 371.3 L585.0 371.4 L586.5 370.6 L588.0 370.3 L589.5 371.2 L591.0 372.4 L592.5 371.9 L594.0 371.6 L595.5 372.1 L597.0 370.9 L598.5 370.5 L600.0 371.3 L601.5 371.3 L603.0 370.8 L604.5 371.2 L606.0 371.2 L607.5 373.0 L609.0 373.3 L610.5 371.5 L612.0 371.5 L612.6 371.7 L613.5 372.2 L614.0 372.1 L615.0 372.1 L616.5 371.8 L618.0 372.2 L619.5 372.4 L621.0 371.8 L622.5 371.7 L624.0 372.1 L625.5 372.4 L627.0 371.8 L628.5 371.8 L630.0 372.4 L631.5 372.0 L633.0 371.7 L634.5 371.9 L636.0 372.1 L637.5 371.9 L639.0 370.9 L640.5 371.4 L642.0 372.3 L643.5 371.7 L645.0 371.6 L646.3 372.2 L646.4 354.6 L646.5 350.2 L647.5 307.0 L648.0 372.7 L649.5 371.8 L651.0 371.4 L652.5 370.8 L654.0 370.8 L655.5 371.0 L657.0 371.6 L658.5 372.4 L660.0 371.9 L661.5 371.0 L663.0 371.2 L664.5 371.8 L666.0 371.7 L667.5 371.6 L669.0 371.2 L670.5 371.5 L672.0 371.9 L673.5 371.4 L675.0 371.0 L676.5 370.5 L678.0 371.6 L679.5 371.2 L681.0 370.7 L682.5 371.5 L684.0 370.8 L685.5 370.9 L687.0 369.4 L687.5 369.3 L688.5 368.9 L690.0 368.4 L691.5 368.0 L693.0 368.3 L694.5 369.0 L696.0 369.0 L697.5 368.4 L699.0 367.5 L700.5 368.4 L702.0 369.0 L703.5 368.4 L705.0 367.9 L706.5 368.1 L708.0 368.7 L709.5 368.1 L711.0 368.3 L712.5 369.4 L714.0 369.4 L715.5 369.1 L717.0 369.7 L718.5 369.1 L720.0 368.3 L721.5 369.2 L723.0 369.6 L724.5 369.1 L726.0 368.5 L727.5 368.0 L729.0 367.9 L730.5 368.1 L732.0 368.3 L733.5 368.4 L735.0 368.1 L736.5 369.5 L738.0 369.2 L739.5 368.3 L741.0 368.8 L741.2 368.9 L742.5 369.0 L742.6 368.8 L743.0 368.8 L744.0 369.0 L744.6 368.7 L745.5 368.5 L747.0 368.6 L748.5 369.3 L750.0 369.3 L751.5 369.7 L752.6 369.2 L753.0 355.4 L753.8 328.3 L754.5 328.3 L756.0 328.3 L757.5 327.9 L759.0 327.9 L760.5 327.4 L762.0 327.2 L763.5 327.8 L765.0 328.0 L766.5 328.1 L768.0 328.0 L769.5 327.7 L771.0 327.8 L772.5 328.2 L774.0 328.1 L775.5 328.0 L777.0 327.8 L778.5 327.7 L780.0 328.2 L781.5 327.7 L783.0 326.8 L784.4 327.0 L784.5 327.1 L786.0 328.0 L786.8 327.6 L787.5 258.5 L787.6 250.0 L789.0 288.3 L790.4 327.1 L790.5 327.0 L792.0 327.5 L793.5 328.8 L795.0 328.9 L796.5 328.8 L798.0 328.2 L799.5 327.8 L801.0 327.7 L802.5 327.4 L804.0 327.7 L805.5 327.6 L807.0 327.8 L808.5 326.0 L810.0 325.1 L811.5 327.1 L813.0 328.5 L814.5 328.7 L816.0 328.4 L817.5 327.2 L819.0 327.0 L820.5 326.9 L822.0 326.0 L823.5 326.9 L825.0 327.2 L826.5 326.8 L828.0 326.6 L829.5 325.8 L831.0 325.7 L832.5 326.1 L834.0 325.5 L835.5 325.5 L837.0 326.6 L838.0 326.5 L838.5 326.4 L840.0 326.7 L841.5 326.7 L843.0 325.9 L844.5 326.4 L846.0 327.3 L847.5 326.9 L849.0 326.2 L850.5 326.5 L851.0 327.1 L852.0 328.5 L853.5 331.0 L855.0 330.7 L856.5 330.2 L858.0 331.3 L859.5 332.3 L861.0 331.1 L862.5 330.5 L864.0 330.2 L865.5 330.2 L867.0 331.0 L868.5 330.7 L870.0 330.8 L871.5 331.4 L873.0 330.9 L874.5 330.8 L876.0 331.0 L877.5 330.4 L879.0 330.6 L880.5 330.6 L882.0 330.1 L883.5 330.1 L885.0 331.4 L886.5 331.7 L888.0 330.8 L889.5 331.0 L891.0 331.3 L892.5 330.8 L894.0 330.6 L895.5 330.7 L897.0 330.1 L898.5 330.2 L900.0 329.9 L901.5 330.5 L903.0 331.4 L904.5 330.8 L906.0 331.6 L907.5 332.0 L909.0 330.2 L910.5 330.5 L912.0 331.0 L913.5 331.3 L915.0 332.0 L916.5 330.3 L918.0 330.4 L919.5 331.3 L921.0 331.7 L922.5 332.0 L924.0 330.9 L925.5 330.7 L927.0 331.6 L928.5 331.9 L930.0 330.7 L931.5 329.8 L933.0 331.8 L934.5 331.8 L936.0 329.9 L937.5 330.3 L939.0 330.5 L940.5 330.7 L942.0 331.4 L943.5 332.6 L945.0 333.6 L946.5 333.5 L948.0 332.0 L949.5 330.6 L951.0 330.0 L952.5 331.3 L954.0 331.4 L955.5 330.3 L957.0 331.4 L958.5 332.2 L960.0 332.2 L961.5 332.0 L963.0 331.3 L964.5 331.1 L966.0 331.7 L967.5 332.2 L969.0 332.5 L970.5 331.3 L972.0 329.7 L973.5 329.3 L975.0 330.5 L976.5 331.6 L978.0 331.7 L979.5 332.5 L981.0 332.5 L982.5 331.2 L984.0 330.6 L985.5 330.7 L987.0 330.6 L988.5 330.4 L990.0 330.9 L991.5 331.3 L993.0 331.8 L994.5 331.2 L996.0 330.1 L997.5 330.3 L999.0 330.3 L1000.5 328.9 L1002.0 329.8 L1003.5 330.2 L1005.0 330.3 L1006.5 330.7 L1008.0 329.7 L1009.5 330.0 L1011.0 331.3 L1012.5 331.9 L1014.0 331.0 L1015.5 329.8 L1017.0 329.2 L1018.5 330.5 L1020.0 331.4 L1021.5 331.0 L1023.0 331.4 L1024.5 331.1 L1026.0 331.1 L1027.5 331.4 L1029.0 330.8 L1030.5 331.1 L1032.0 332.1 L1033.5 332.2 L1035.0 331.8 L1036.5 331.1 L1038.0 330.1 L1039.5 330.8 L1041.0 332.3 L1042.5 331.2 L1044.0 331.0 L1045.5 332.3 L1047.0 332.3 L1048.5 331.6 L1050.0 330.9 L1051.5 331.8 L1053.0 332.4 L1054.5 331.7 L1056.0 330.7 L1057.5 331.1 L1059.0 331.4 L1060.5 332.2 L1062.0 332.7 L1063.5 332.6 L1065.0 332.9 L1066.5 331.3 L1068.0 330.5 L1069.5 332.0 L1071.0 332.0 L1072.5 331.3 L1074.0 331.5 L1075.5 331.8 L1077.0 331.8 L1078.5 332.0 L1080.0 333.1 L1081.5 333.2 L1083.0 332.5 L1084.5 331.7 L1086.0 332.2 L1087.5 331.6 L1089.0 330.7 L1090.0 331.6 L1090.5 343.9 L1091.6 370.2 L1092.0 370.4 L1093.5 370.6 L1095.0 370.7 L1096.5 370.6 L1098.0 370.4 L1099.5 370.7 L1101.0 369.9 L1102.5 369.7 L1103.2 370.5 L1103.6 370.8 L1104.0 371.1 L1104.6 372.0 L1105.5 371.9 L1105.6 371.8 L1107.0 371.6 L1108.5 372.4 L1110.0 371.8 L1111.5 372.4 L1113.0 373.7 L1114.5 372.4 L1116.0 371.3 L1117.5 371.5 L1119.0 371.2 L1120.5 371.7 L1121.5 371.7 L1122.0 366.3 L1123.2 353.5 L1123.5 356.5 L1125.0 371.6 L1126.5 371.6 L1128.0 372.4 L1129.5 373.1 L1131.0 372.6 L1132.5 371.2 L1134.0 370.6 L1135.5 371.6 L1137.0 372.1 L1138.5 371.0 L1140.0 370.6 L1141.5 371.8 L1143.0 371.8 L1144.5 370.6 L1146.0 370.8 L1147.5 371.2 L1149.0 371.5 L1150.5 371.7 L1152.0 371.4 L1153.5 370.9 L1155.0 371.2 L1156.5 371.5 L1158.0 371.3 L1159.5 372.0 L1161.0 372.8 L1162.5 372.2 L1164.0 371.2 L1165.5 370.6 L1167.0 370.4 L1168.5 371.3 L1170.0 372.6 L1170.5 371.8 L1171.5 367.9 L1172.0 366.0 L1173.0 369.9 L1173.5 371.6 L1174.5 372.1 L1176.0 373.2 L1177.5 373.1 L1179.0 371.5 L1180.5 371.3 L1182.0 371.8 L1183.5 372.3 L1185.0 372.5 L1186.5 371.6 L1188.0 371.1 L1189.5 372.4 L1191.0 373.4 L1192.5 372.8 L1194.0 372.6 L1195.5 373.0 L1197.0 372.1 L1198.5 371.9 L1200.0 372.2 L1201.5 372.0 L1203.0 372.2 L1204.5 371.3 L1206.0 371.5 L1207.5 371.8 L1209.0 371.4 L1210.5 372.1 L1212.0 372.4 L1213.5 371.8 L1215.0 371.7 L1216.5 371.9 L1218.0 373.1 L1219.5 373.5 L1221.0 371.6 L1222.5 371.5 L1224.0 372.0 L1225.5 371.3 L1227.0 371.2 L1228.5 371.6 L1230.0 372.5 L1231.5 372.7 L1233.0 372.3 L1234.5 372.1 L1236.0 371.4 L1237.5 372.2 L1239.0 372.4 L1240.5 371.9 L1242.0 371.4 L1243.5 371.4 L1245.0 372.4 L1246.5 372.4 L1248.0 372.6 L1249.5 372.9 L1251.0 372.8 L1252.5 372.6 L1254.0 372.3 L1255.5 372.7 L1257.0 372.9 L1258.5 372.3 L1260.0 371.8 L1261.5 371.8 L1263.0 371.6 L1264.5 371.6 L1266.0 372.2 L1267.5 372.1 L1267.6 372.0" stroke="#222" stroke-width="2" fill="none" stroke-linejoin="round"/><path d="M64.5 164.9 L66.0 164.8 L67.5 164.4 L69.0 164.2 L70.5 164.8 L72.0 165.4 L73.5 165.4 L75.0 165.3 L76.5 165.1 L78.0 165.4 L79.5 165.1 L81.0 165.0 L82.5 165.3 L84.0 165.3 L85.5 165.1 L87.0 165.5 L88.5 165.7 L90.0 165.1 L91.5 164.8 L93.0 164.7 L94.5 165.3 L96.0 165.4 L97.5 165.2 L99.0 165.3 L100.5 165.3 L102.0 164.7 L103.5 164.3 L105.0 165.0 L106.5 165.4 L108.0 165.1 L109.5 165.0 L111.0 164.6 L112.5 164.9 L114.0 166.1 L115.5 165.3 L117.0 164.8 L118.5 165.8 L120.0 165.9 L121.5 165.6 L123.0 166.0 L124.5 165.4 L126.0 165.1 L127.5 165.7 L129.0 165.8 L130.5 164.9 L132.0 164.5 L133.5 165.0 L135.0 165.2 L136.5 165.5 L138.0 165.4 L139.5 165.3 L141.0 165.7 L142.5 165.5 L144.0 164.9 L145.5 165.6 L147.0 166.1 L148.5 165.3 L150.0 165.1 L151.5 165.6 L153.0 166.1 L154.5 165.3 L156.0 165.0 L157.5 165.4 L159.0 165.2 L160.5 165.4 L162.0 166.3 L163.5 166.3 L165.0 165.2 L166.5 164.8 L168.0 165.3 L168.5 165.6 L169.5 164.1 L169.8 163.6 L171.0 163.9 L171.2 163.9 L172.4 377.7 L172.5 377.7 L172.6 377.6 L174.0 377.1 L175.5 377.1 L177.0 377.4 L178.5 377.0 L180.0 376.8 L181.5 377.0 L183.0 377.5 L184.5 377.9 L186.0 377.7 L187.5 377.1 L189.0 376.8 L190.5 376.8 L192.0 377.4 L193.5 377.9 L195.0 377.8 L196.5 377.3 L198.0 377.1 L199.5 376.9 L201.0 376.5 L202.5 376.9 L204.0 377.2 L205.5 377.5 L207.0 377.7 L208.5 377.6 L210.0 377.0 L211.5 376.9 L213.0 377.6 L214.5 377.7 L216.0 377.7 L217.5 377.2 L219.0 376.9 L220.5 377.0 L222.0 377.2 L223.5 377.7 L225.0 377.3 L226.5 376.7 L228.0 376.7 L229.5 377.1 L231.0 377.3 L232.5 377.4 L234.0 377.4 L235.5 377.0 L237.0 377.3 L238.5 377.8 L240.0 377.5 L241.5 377.4 L243.0 377.3 L244.5 377.1 L246.0 376.9 L247.5 377.4 L249.0 377.7 L250.5 377.3 L252.0 377.3 L253.5 377.3 L255.0 377.3 L256.5 377.1 L258.0 376.8 L259.5 376.9 L261.0 376.8 L262.5 376.8 L264.0 377.0 L265.5 377.2 L267.0 377.6 L268.5 377.3 L270.0 377.1 L271.5 377.4 L273.0 377.2 L274.5 376.7 L276.0 376.6 L277.5 377.2 L279.0 377.5 L280.5 377.5 L282.0 377.6 L283.5 377.4 L285.0 376.9 L286.5 376.8 L288.0 377.5 L289.5 377.5 L291.0 377.2 L292.5 377.2 L294.0 377.1 L295.5 376.7 L297.0 376.5 L298.5 377.3 L300.0 378.3 L301.5 377.8 L303.0 376.8 L304.5 377.1 L306.0 377.6 L307.5 377.6 L309.0 377.4 L310.5 377.1 L312.0 376.8 L313.5 377.2 L315.0 377.3 L316.5 377.2 L318.0 377.0 L319.5 377.4 L321.0 377.8 L322.5 377.1 L324.0 377.1 L325.5 377.3 L327.0 377.2 L328.5 377.4 L330.0 377.4 L331.5 377.5 L333.0 377.8 L334.5 377.3 L336.0 377.1 L337.5 377.1 L339.0 377.2 L340.5 377.5 L342.0 377.3 L343.5 377.7 L345.0 377.9 L346.5 377.2 L348.0 376.9 L349.5 377.0 L351.0 377.2 L352.5 377.5 L354.0 377.2 L355.5 377.1 L357.0 377.2 L358.5 377.0 L360.0 377.0 L361.5 377.2 L363.0 377.6 L364.5 377.5 L366.0 377.6 L367.5 377.8 L369.0 377.2 L370.5 376.8 L372.0 377.3 L373.5 377.7 L375.0 377.6 L376.5 377.3 L378.0 377.3 L379.5 377.4 L381.0 377.2 L382.5 377.0 L384.0 377.6 L385.5 377.9 L387.0 377.8 L388.5 377.6 L390.0 377.2 L391.5 377.0 L393.0 377.3 L394.5 373.5 L394.7 373.0 L396.0 376.2 L396.4 377.3 L397.5 377.4 L399.0 377.1 L400.5 376.9 L402.0 377.1 L403.5 376.9 L405.0 376.6 L406.5 376.8 L408.0 376.9 L409.0 377.0 L409.5 259.7 L409.9 166.2 L411.0 167.0 L411.2 166.9 L412.5 166.4 L413.2 165.4 L414.0 143.4 L414.1 140.7 L415.5 140.8 L417.0 140.7 L418.5 140.2 L419.5 140.0 L420.0 139.1 L421.0 137.2 L421.5 136.9 L423.0 136.0 L423.5 135.6 L424.5 136.0 L426.0 135.9 L427.5 135.4 L429.0 135.8 L430.5 135.9 L432.0 135.7 L433.5 136.5 L435.0 161.8 L436.5 161.9 L438.0 161.3 L439.5 161.0 L441.0 161.2 L442.5 161.6 L444.0 162.5 L445.5 161.5 L447.0 160.8 L448.5 162.6 L450.0 162.2 L451.5 161.3 L453.0 161.9 L454.5 161.5 L456.0 161.2 L457.5 161.4 L459.0 160.8 L460.5 161.2 L462.0 162.1 L463.5 161.5 L465.0 161.6 L466.5 161.8 L468.0 162.1 L469.5 161.7 L471.0 160.4 L472.5 160.5 L474.0 160.8 L475.5 161.3 L477.0 162.0 L478.5 162.3 L480.0 162.4 L481.5 161.5 L483.0 160.9 L484.5 161.8 L486.0 161.6 L487.5 160.7 L489.0 160.8 L490.5 161.3 L492.0 161.3 L493.5 161.9 L495.0 162.4 L496.5 161.4 L498.0 161.1 L499.5 162.4 L501.0 162.1 L502.5 160.9 L504.0 160.8 L505.5 161.4 L507.0 162.1 L508.5 161.5 L510.0 161.1 L511.5 161.3 L513.0 160.9 L514.5 161.3 L516.0 162.3 L517.5 162.1 L519.0 161.8 L520.5 162.2 L522.0 162.1 L523.5 161.8 L525.0 162.0 L526.5 162.4 L528.0 162.3 L529.5 161.4 L531.0 160.8 L532.5 162.1 L534.0 163.0 L535.5 162.5 L537.0 162.7 L538.5 162.1 L540.0 161.9 L541.5 161.7 L543.0 161.1 L544.5 161.4 L546.0 161.6 L547.5 161.2 L549.0 161.8 L550.5 162.3 L552.0 161.8 L553.5 162.1 L555.0 162.7 L556.5 162.1 L558.0 161.7 L559.5 162.4 L561.0 162.5 L562.5 163.0 L564.0 162.5 L565.5 161.9 L567.0 162.2 L568.5 161.0 L570.0 160.8 L571.5 161.6 L573.0 162.0 L574.5 161.9 L576.0 161.3 L577.5 161.3 L579.0 161.7 L580.5 161.8 L582.0 161.2 L583.5 161.4 L585.0 161.8 L586.5 161.4 L588.0 161.4 L589.5 161.9 L591.0 162.3 L592.5 162.1 L594.0 162.1 L595.5 162.8 L597.0 162.0 L598.5 161.4 L600.0 161.7 L601.5 161.2 L603.0 160.8 L604.5 161.3 L606.0 161.7 L607.5 163.1 L609.0 163.1 L610.5 162.0 L612.0 161.9 L612.6 246.3 L613.5 373.2 L614.0 373.1 L615.0 373.1 L616.5 372.8 L618.0 373.2 L619.5 373.4 L621.0 372.8 L622.5 372.7 L624.0 373.1 L625.5 373.4 L627.0 372.8 L628.5 372.8 L630.0 373.4 L631.5 373.0 L633.0 372.7 L634.5 372.9 L636.0 373.1 L637.5 372.9 L639.0 371.9 L640.5 372.4 L642.0 373.3 L643.5 372.7 L645.0 372.6 L646.3 373.2 L646.4 355.6 L646.5 338.0 L647.5 163.2 L648.0 163.2 L649.5 162.3 L651.0 161.7 L652.5 161.5 L654.0 161.6 L655.5 161.7 L657.0 162.3 L658.5 162.6 L660.0 162.0 L661.5 161.2 L663.0 161.3 L664.5 161.6 L666.0 161.5 L667.5 161.6 L669.0 161.0 L670.5 161.4 L672.0 161.9 L673.5 161.2 L675.0 160.9 L676.5 160.9 L678.0 161.8 L679.5 161.5 L681.0 161.0 L682.5 161.1 L684.0 160.6 L685.5 160.8 L687.0 159.1 L687.5 159.1 L688.5 158.9 L690.0 158.5 L691.5 158.3 L693.0 158.9 L694.5 159.2 L696.0 158.9 L697.5 158.7 L699.0 158.1 L700.5 158.6 L702.0 158.9 L703.5 158.2 L705.0 157.8 L706.5 158.3 L708.0 158.7 L709.5 158.1 L711.0 158.5 L712.5 159.5 L714.0 159.1 L715.5 158.5 L717.0 159.0 L718.5 158.6 L720.0 157.8 L721.5 158.7 L723.0 159.1 L724.5 158.3 L726.0 158.1 L727.5 158.2 L729.0 158.2 L730.5 158.6 L732.0 158.7 L733.5 158.4 L735.0 157.9 L736.5 158.6 L738.0 158.4 L739.5 158.0 L741.0 158.3 L741.2 158.6 L742.5 354.9 L742.6 369.8 L743.0 369.8 L744.0 370.0 L744.6 369.7 L745.5 369.5 L747.0 369.6 L748.5 370.3 L750.0 370.3 L751.5 370.7 L752.6 370.2 L753.0 356.4 L753.8 329.3 L754.5 329.3 L756.0 329.3 L757.5 328.9 L759.0 328.9 L760.5 328.4 L762.0 328.2 L763.5 328.8 L765.0 329.0 L766.5 329.1 L768.0 329.0 L769.5 328.7 L771.0 328.8 L772.5 329.2 L774.0 329.1 L775.5 329.0 L777.0 328.8 L778.5 328.7 L780.0 329.2 L781.5 328.7 L783.0 327.8 L784.4 328.0 L784.5 328.1 L786.0 329.0 L786.8 328.6 L787.5 144.3 L787.6 119.4 L789.0 118.0 L790.4 117.0 L790.5 117.0 L792.0 117.0 L793.5 118.7 L795.0 118.5 L796.5 117.8 L798.0 117.5 L799.5 117.5 L801.0 117.3 L802.5 117.0 L804.0 117.5 L805.5 117.7 L807.0 117.4 L808.5 115.5 L810.0 115.0 L811.5 117.1 L813.0 118.5 L814.5 118.5 L816.0 118.0 L817.5 116.6 L819.0 116.4 L820.5 116.7 L822.0 115.8 L823.5 116.2 L825.0 116.8 L826.5 116.5 L828.0 116.3 L829.5 115.8 L831.0 115.7 L832.5 116.0 L834.0 115.3 L835.5 115.4 L837.0 116.8 L838.0 116.6 L838.5 116.6 L840.0 116.4 L841.5 116.3 L843.0 115.9 L844.5 116.0 L846.0 116.8 L847.5 116.8 L849.0 116.2 L850.5 116.6 L851.0 116.8 L852.0 118.4 L853.5 120.9 L855.0 120.4 L856.5 119.9 L858.0 121.5 L859.5 122.2 L861.0 120.7 L862.5 120.2 L864.0 119.9 L865.5 120.6 L867.0 121.5 L868.5 120.9 L870.0 120.7 L871.5 121.3 L873.0 120.7 L874.5 120.9 L876.0 121.1 L877.5 120.4 L879.0 120.4 L880.5 120.9 L882.0 120.8 L883.5 120.1 L885.0 120.9 L886.5 121.4 L888.0 121.0 L889.5 121.1 L891.0 121.4 L892.5 121.1 L894.0 121.3 L895.5 120.8 L897.0 120.0 L898.5 120.2 L900.0 119.9 L901.5 120.5 L903.0 121.2 L904.5 120.6 L906.0 121.5 L907.5 121.6 L909.0 120.0 L910.5 120.7 L912.0 121.0 L913.5 121.3 L915.0 122.1 L916.5 120.6 L918.0 120.4 L919.5 120.9 L921.0 121.5 L922.5 122.1 L924.0 120.8 L925.5 121.1 L927.0 122.4 L928.5 122.2 L930.0 121.3 L931.5 120.2 L933.0 121.5 L934.5 121.9 L936.0 120.9 L937.5 121.1 L939.0 120.3 L940.5 120.4 L942.0 121.1 L943.5 121.9 L945.0 123.1 L946.5 123.2 L948.0 121.8 L949.5 120.6 L951.0 120.5 L952.5 121.5 L954.0 121.7 L955.5 120.7 L957.0 121.7 L958.5 122.1 L960.0 121.8 L961.5 122.2 L963.0 121.5 L964.5 120.7 L966.0 121.1 L967.5 121.9 L969.0 122.1 L970.5 121.2 L972.0 120.2 L973.5 119.8 L975.0 120.5 L976.5 121.3 L978.0 121.2 L979.5 121.8 L981.0 122.2 L982.5 121.3 L984.0 120.4 L985.5 120.5 L987.0 120.6 L988.5 120.7 L990.0 120.9 L991.5 121.1 L993.0 121.4 L994.5 120.9 L996.0 120.3 L997.5 120.3 L999.0 120.0 L1000.5 119.1 L1002.0 120.4 L1003.5 120.8 L1005.0 120.3 L1006.5 120.2 L1008.0 119.4 L1009.5 120.0 L1011.0 120.6 L1012.5 121.2 L1014.0 121.1 L1015.5 120.2 L1017.0 119.6 L1018.5 120.4 L1020.0 120.7 L1021.5 121.0 L1023.0 121.8 L1024.5 121.3 L1026.0 121.4 L1027.5 121.9 L1029.0 121.1 L1030.5 121.1 L1032.0 121.5 L1033.5 122.1 L1035.0 121.8 L1036.5 120.3 L1038.0 119.4 L1039.5 120.6 L1041.0 122.5 L1042.5 121.0 L1044.0 120.7 L1045.5 122.4 L1047.0 122.5 L1048.5 121.9 L1050.0 121.3 L1051.5 121.6 L1053.0 121.7 L1054.5 121.8 L1056.0 121.1 L1057.5 120.9 L1059.0 121.4 L1060.5 122.2 L1062.0 122.2 L1063.5 122.3 L1065.0 122.4 L1066.5 121.1 L1068.0 120.8 L1069.5 122.2 L1071.0 122.3 L1072.5 121.3 L1074.0 121.0 L1075.5 121.5 L1077.0 121.5 L1078.5 121.4 L1080.0 122.5 L1081.5 122.9 L1083.0 122.5 L1084.5 121.3 L1086.0 121.7 L1087.5 121.4 L1089.0 120.6 L1090.0 121.4 L1090.5 133.7 L1091.6 159.9 L1092.0 159.9 L1093.5 160.3 L1095.0 160.8 L1096.5 160.6 L1098.0 160.4 L1099.5 160.5 L1101.0 160.1 L1102.5 159.9 L1103.2 160.4 L1103.6 221.0 L1104.0 281.7 L1104.6 373.0 L1105.5 372.9 L1105.6 372.8 L1107.0 372.6 L1108.5 373.4 L1110.0 372.8 L1111.5 373.4 L1113.0 374.7 L1114.5 373.4 L1116.0 372.3 L1117.5 372.5 L1119.0 372.2 L1120.5 372.7 L1121.5 372.7 L1122.0 367.3 L1123.2 354.5 L1123.5 357.5 L1125.0 372.6 L1126.5 372.6 L1128.0 373.4 L1129.5 374.1 L1131.0 373.6 L1132.5 372.2 L1134.0 371.6 L1135.5 372.6 L1137.0 373.1 L1138.5 372.0 L1140.0 371.6 L1141.5 372.8 L1143.0 372.8 L1144.5 371.6 L1146.0 371.8 L1147.5 372.2 L1149.0 372.5 L1150.5 372.7 L1152.0 372.4 L1153.5 371.9 L1155.0 372.2 L1156.5 372.5 L1158.0 372.3 L1159.5 373.0 L1161.0 373.8 L1162.5 373.2 L1164.0 372.2 L1165.5 371.6 L1167.0 371.4 L1168.5 372.3 L1170.0 373.6 L1170.5 372.8 L1171.5 368.9 L1172.0 367.0 L1173.0 370.9 L1173.5 372.6 L1174.5 373.1 L1176.0 374.2 L1177.5 374.1 L1179.0 372.5 L1180.5 372.3 L1182.0 372.8 L1183.5 373.3 L1185.0 373.5 L1186.5 372.6 L1188.0 372.1 L1189.5 373.4 L1191.0 374.4 L1192.5 373.8 L1194.0 373.6 L1195.5 374.0 L1197.0 373.1 L1198.5 372.9 L1200.0 373.2 L1201.5 373.0 L1203.0 373.2 L1204.5 372.3 L1206.0 372.5 L1207.5 372.8 L1209.0 372.4 L1210.5 373.1 L1212.0 373.4 L1213.5 372.8 L1215.0 372.7 L1216.5 372.9 L1218.0 374.1 L1219.5 374.5 L1221.0 372.6 L1222.5 372.5 L1224.0 373.0 L1225.5 372.3 L1227.0 372.2 L1228.5 372.6 L1230.0 373.5 L1231.5 373.7 L1233.0 373.3 L1234.5 373.1 L1236.0 372.4 L1237.5 373.2 L1239.0 373.4 L1240.5 372.9 L1242.0 372.4 L1243.5 372.4 L1245.0 373.4 L1246.5 373.4 L1248.0 373.6 L1249.5 373.9 L1251.0 373.8 L1252.5 373.6 L1254.0 373.3 L1255.5 373.7 L1257.0 373.9 L1258.5 373.3 L1260.0 372.8 L1261.5 372.8 L1263.0 372.6 L1264.5 372.6 L1266.0 373.2 L1267.5 373.1 L1267.6 373.0 L1267.6 382.3 L64.5 382.3 Z" fill="rgba(238,5,25,0.3)"/><path d="M64.5 164.9 L66.0 164.8 L67.5 164.4 L69.0 164.2 L70.5 164.8 L72.0 165.4 L73.5 165.4 L75.0 165.3 L76.5 165.1 L78.0 165.4 L79.5 165.1 L81.0 165.0 L82.5 165.3 L84.0 165.3 L85.5 165.1 L87.0 165.5 L88.5 165.7 L90.0 165.1 L91.5 164.8 L93.0 164.7 L94.5 165.3 L96.0 165.4 L97.5 165.2 L99.0 165.3 L100.5 165.3 L102.0 164.7 L103.5 164.3 L105.0 165.0 L106.5 165.4 L108.0 165.1 L109.5 165.0 L111.0 164.6 L112.5 164.9 L114.0 166.1 L115.5 165.3 L117.0 164.8 L118.5 165.8 L120.0 165.9 L121.5 165.6 L123.0 166.0 L124.5 165.4 L126.0 165.1 L127.5 165.7 L129.0 165.8 L130.5 164.9 L132.0 164.5 L133.5 165.0 L135.0 165.2 L136.5 165.5 L138.0 165.4 L139.5 165.3 L141.0 165.7 L142.5 165.5 L144.0 164.9 L145.5 165.6 L147.0 166.1 L148.5 165.3 L150.0 165.1 L151.5 165.6 L153.0 166.1 L154.5 165.3 L156.0 165.0 L157.5 165.4 L159.0 165.2 L160.5 165.4 L162.0 166.3 L163.5 166.3 L165.0 165.2 L166.5 164.8 L168.0 165.3 L168.5 165.6 L169.5 164.1 L169.8 163.6 L171.0 163.9 L171.2 163.9 L172.4 377.7 L172.5 377.7 L172.6 377.6 L174.0 377.1 L175.5 377.1 L177.0 377.4 L178.5 377.0 L180.0 376.8 L181.5 377.0 L183.0 377.5 L184.5 377.9 L186.0 377.7 L187.5 377.1 L189.0 376.8 L190.5 376.8 L192.0 377.4 L193.5 377.9 L195.0 377.8 L196.5 377.3 L198.0 377.1 L199.5 376.9 L201.0 376.5 L202.5 376.9 L204.0 377.2 L205.5 377.5 L207.0 377.7 L208.5 377.6 L210.0 377.0 L211.5 376.9 L213.0 377.6 L214.5 377.7 L216.0 377.7 L217.5 377.2 L219.0 376.9 L220.5 377.0 L222.0 377.2 L223.5 377.7 L225.0 377.3 L226.5 376.7 L228.0 376.7 L229.5 377.1 L231.0 377.3 L232.5 377.4 L234.0 377.4 L235.5 377.0 L237.0 377.3 L238.5 377.8 L240.0 377.5 L241.5 377.4 L243.0 377.3 L244.5 377.1 L246.0 376.9 L247.5 377.4 L249.0 377.7 L250.5 377.3 L252.0 377.3 L253.5 377.3 L255.0 377.3 L256.5 377.1 L258.0 376.8 L259.5 376.9 L261.0 376.8 L262.5 376.8 L264.0 377.0 L265.5 377.2 L267.0 377.6 L268.5 377.3 L270.0 377.1 L271.5 377.4 L273.0 377.2 L274.5 376.7 L276.0 376.6 L277.5 377.2 L279.0 377.5 L280.5 377.5 L282.0 377.6 L283.5 377.4 L285.0 376.9 L286.5 376.8 L288.0 377.5 L289.5 377.5 L291.0 377.2 L292.5 377.2 L294.0 377.1 L295.5 376.7 L297.0 376.5 L298.5 377.3 L300.0 378.3 L301.5 377.8 L303.0 376.8 L304.5 377.1 L306.0 377.6 L307.5 377.6 L309.0 377.4 L310.5 377.1 L312.0 376.8 L313.5 377.2 L315.0 377.3 L316.5 377.2 L318.0 377.0 L319.5 377.4 L321.0 377.8 L322.5 377.1 L324.0 377.1 L325.5 377.3 L327.0 377.2 L328.5 377.4 L330.0 377.4 L331.5 377.5 L333.0 377.8 L334.5 377.3 L336.0 377.1 L337.5 377.1 L339.0 377.2 L340.5 377.5 L342.0 377.3 L343.5 377.7 L345.0 377.9 L346.5 377.2 L348.0 376.9 L349.5 377.0 L351.0 377.2 L352.5 377.5 L354.0 377.2 L355.5 377.1 L357.0 377.2 L358.5 377.0 L360.0 377.0 L361.5 377.2 L363.0 377.6 L364.5 377.5 L366.0 377.6 L367.5 377.8 L369.0 377.2 L370.5 376.8 L372.0 377.3 L373.5 377.7 L375.0 377.6 L376.5 377.3 L378.0 377.3 L379.5 377.4 L381.0 377.2 L382.5 377.0 L384.0 377.6 L385.5 377.9 L387.0 377.8 L388.5 377.6 L390.0 377.2 L391.5 377.0 L393.0 377.3 L394.5 373.5 L394.7 373.0 L396.0 376.2 L396.4 377.3 L397.5 377.4 L399.0 377.1 L400.5 376.9 L402.0 377.1 L403.5 376.9 L405.0 376.6 L406.5 376.8 L408.0 376.9 L409.0 377.0 L409.5 259.7 L409.9 166.2 L411.0 167.0 L411.2 166.9 L412.5 166.4 L413.2 165.4 L414.0 143.4 L414.1 140.7 L415.5 140.8 L417.0 140.7 L418.5 140.2 L419.5 140.0 L420.0 139.1 L421.0 137.2 L421.5 136.9 L423.0 136.0 L423.5 135.6 L424.5 136.0 L426.0 135.9 L427.5 135.4 L429.0 135.8 L430.5 135.9 L432.0 135.7 L433.5 136.5 L435.0 161.8 L436.5 161.9 L438.0 161.3 L439.5 161.0 L441.0 161.2 L442.5 161.6 L444.0 162.5 L445.5 161.5 L447.0 160.8 L448.5 162.6 L450.0 162.2 L451.5 161.3 L453.0 161.9 L454.5 161.5 L456.0 161.2 L457.5 161.4 L459.0 160.8 L460.5 161.2 L462.0 162.1 L463.5 161.5 L465.0 161.6 L466.5 161.8 L468.0 162.1 L469.5 161.7 L471.0 160.4 L472.5 160.5 L474.0 160.8 L475.5 161.3 L477.0 162.0 L478.5 162.3 L480.0 162.4 L481.5 161.5 L483.0 160.9 L484.5 161.8 L486.0 161.6 L487.5 160.7 L489.0 160.8 L490.5 161.3 L492.0 161.3 L493.5 161.9 L495.0 162.4 L496.5 161.4 L498.0 161.1 L499.5 162.4 L501.0 162.1 L502.5 160.9 L504.0 160.8 L505.5 161.4 L507.0 162.1 L508.5 161.5 L510.0 161.1 L511.5 161.3 L513.0 160.9 L514.5 161.3 L516.0 162.3 L517.5 162.1 L519.0 161.8 L520.5 162.2 L522.0 162.1 L523.5 161.8 L525.0 162.0 L526.5 162.4 L528.0 162.3 L529.5 161.4 L531.0 160.8 L532.5 162.1 L534.0 163.0 L535.5 162.5 L537.0 162.7 L538.5 162.1 L540.0 161.9 L541.5 161.7 L543.0 161.1 L544.5 161.4 L546.0 161.6 L547.5 161.2 L549.0 161.8 L550.5 162.3 L552.0 161.8 L553.5 162.1 L555.0 162.7 L556.5 162.1 L558.0 161.7 L559.5 162.4 L561.0 162.5 L562.5 163.0 L564.0 162.5 L565.5 161.9 L567.0 162.2 L568.5 161.0 L570.0 160.8 L571.5 161.6 L573.0 162.0 L574.5 161.9 L576.0 161.3 L577.5 161.3 L579.0 161.7 L580.5 161.8 L582.0 161.2 L583.5 161.4 L585.0 161.8 L586.5 161.4 L588.0 161.4 L589.5 161.9 L591.0 162.3 L592.5 162.1 L594.0 162.1 L595.5 162.8 L597.0 162.0 L598.5 161.4 L600.0 161.7 L601.5 161.2 L603.0 160.8 L604.5 161.3 L606.0 161.7 L607.5 163.1 L609.0 163.1 L610.5 162.0 L612.0 161.9 L612.6 246.3 L613.5 373.2 L614.0 373.1 L615.0 373.1 L616.5 372.8 L618.0 373.2 L619.5 373.4 L621.0 372.8 L622.5 372.7 L624.0 373.1 L625.5 373.4 L627.0 372.8 L628.5 372.8 L630.0 373.4 L631.5 373.0 L633.0 372.7 L634.5 372.9 L636.0 373.1 L637.5 372.9 L639.0 371.9 L640.5 372.4 L642.0 373.3 L643.5 372.7 L645.0 372.6 L646.3 373.2 L646.4 355.6 L646.5 338.0 L647.5 163.2 L648.0 163.2 L649.5 162.3 L651.0 161.7 L652.5 161.5 L654.0 161.6 L655.5 161.7 L657.0 162.3 L658.5 162.6 L660.0 162.0 L661.5 161.2 L663.0 161.3 L664.5 161.6 L666.0 161.5 L667.5 161.6 L669.0 161.0 L670.5 161.4 L672.0 161.9 L673.5 161.2 L675.0 160.9 L676.5 160.9 L678.0 161.8 L679.5 161.5 L681.0 161.0 L682.5 161.1 L684.0 160.6 L685.5 160.8 L687.0 159.1 L687.5 159.1 L688.5 158.9 L690.0 158.5 L691.5 158.3 L693.0 158.9 L694.5 159.2 L696.0 158.9 L697.5 158.7 L699.0 158.1 L700.5 158.6 L702.0 158.9 L703.5 158.2 L705.0 157.8 L706.5 158.3 L708.0 158.7 L709.5 158.1 L711.0 158.5 L712.5 159.5 L714.0 159.1 L715.5 158.5 L717.0 159.0 L718.5 158.6 L720.0 157.8 L721.5 158.7 L723.0 159.1 L724.5 158.3 L726.0 158.1 L727.5 158.2 L729.0 158.2 L730.5 158.6 L732.0 158.7 L733.5 158.4 L735.0 157.9 L736.5 158.6 L738.0 158.4 L739.5 158.0 L741.0 158.3 L741.2 158.6 L742.5 354.9 L742.6 369.8 L743.0 369.8 L744.0 370.0 L744.6 369.7 L745.5 369.5 L747.0 369.6 L748.5 370.3 L750.0 370.3 L751.5 370.7 L752.6 370.2 L753.0 356.4 L753.8 329.3 L754.5 329.3 L756.0 329.3 L757.5 328.9 L759.0 328.9 L760.5 328.4 L762.0 328.2 L763.5 328.8 L765.0 329.0 L766.5 329.1 L768.0 329.0 L769.5 328.7 L771.0 328.8 L772.5 329.2 L774.0 329.1 L775.5 329.0 L777.0 328.8 L778.5 328.7 L780.0 329.2 L781.5 328.7 L783.0 327.8 L784.4 328.0 L784.5 328.1 L786.0 329.0 L786.8 328.6 L787.5 144.3 L787.6 119.4 L789.0 118.0 L790.4 117.0 L790.5 117.0 L792.0 117.0 L793.5 118.7 L795.0 118.5 L796.5 117.8 L798.0 117.5 L799.5 117.5 L801.0 117.3 L802.5 117.0 L804.0 117.5 L805.5 117.7 L807.0 117.4 L808.5 115.5 L810.0 115.0 L811.5 117.1 L813.0 118.5 L814.5 118.5 L816.0 118.0 L817.5 116.6 L819.0 116.4 L820.5 116.7 L822.0 115.8 L823.5 116.2 L825.0 116.8 L826.5 116.5 L828.0 116.3 L829.5 115.8 L831.0 115.7 L832.5 116.0 L834.0 115.3 L835.5 115.4 L837.0 116.8 L838.0 116.6 L838.5 116.6 L840.0 116.4 L841.5 116.3 L843.0 115.9 L844.5 116.0 L846.0 116.8 L847.5 116.8 L849.0 116.2 L850.5 116.6 L851.0 116.8 L852.0 118.4 L853.5 120.9 L855.0 120.4 L856.5 119.9 L858.0 121.5 L859.5 122.2 L861.0 120.7 L862.5 120.2 L864.0 119.9 L865.5 120.6 L867.0 121.5 L868.5 120.9 L870.0 120.7 L871.5 121.3 L873.0 120.7 L874.5 120.9 L876.0 121.1 L877.5 120.4 L879.0 120.4 L880.5 120.9 L882.0 120.8 L883.5 120.1 L885.0 120.9 L886.5 121.4 L888.0 121.0 L889.5 121.1 L891.0 121.4 L892.5 121.1 L894.0 121.3 L895.5 120.8 L897.0 120.0 L898.5 120.2 L900.0 119.9 L901.5 120.5 L903.0 121.2 L904.5 120.6 L906.0 121.5 L907.5 121.6 L909.0 120.0 L910.5 120.7 L912.0 121.0 L913.5 121.3 L915.0 122.1 L916.5 120.6 L918.0 120.4 L919.5 120.9 L921.0 121.5 L922.5 122.1 L924.0 120.8 L925.5 121.1 L927.0 122.4 L928.5 122.2 L930.0 121.3 L931.5 120.2 L933.0 121.5 L934.5 121.9 L936.0 120.9 L937.5 121.1 L939.0 120.3 L940.5 120.4 L942.0 121.1 L943.5 121.9 L945.0 123.1 L946.5 123.2 L948.0 121.8 L949.5 120.6 L951.0 120.5 L952.5 121.5 L954.0 121.7 L955.5 120.7 L957.0 121.7 L958.5 122.1 L960.0 121.8 L961.5 122.2 L963.0 121.5 L964.5 120.7 L966.0 121.1 L967.5 121.9 L969.0 122.1 L970.5 121.2 L972.0 120.2 L973.5 119.8 L975.0 120.5 L976.5 121.3 L978.0 121.2 L979.5 121.8 L981.0 122.2 L982.5 121.3 L984.0 120.4 L985.5 120.5 L987.0 120.6 L988.5 120.7 L990.0 120.9 L991.5 121.1 L993.0 121.4 L994.5 120.9 L996.0 120.3 L997.5 120.3 L999.0 120.0 L1000.5 119.1 L1002.0 120.4 L1003.5 120.8 L1005.0 120.3 L1006.5 120.2 L1008.0 119.4 L1009.5 120.0 L1011.0 120.6 L1012.5 121.2 L1014.0 121.1 L1015.5 120.2 L1017.0 119.6 L1018.5 120.4 L1020.0 120.7 L1021.5 121.0 L1023.0 121.8 L1024.5 121.3 L1026.0 121.4 L1027.5 121.9 L1029.0 121.1 L1030.5 121.1 L1032.0 121.5 L1033.5 122.1 L1035.0 121.8 L1036.5 120.3 L1038.0 119.4 L1039.5 120.6 L1041.0 122.5 L1042.5 121.0 L1044.0 120.7 L1045.5 122.4 L1047.0 122.5 L1048.5 121.9 L1050.0 121.3 L1051.5 121.6 L1053.0 121.7 L1054.5 121.8 L1056.0 121.1 L1057.5 120.9 L1059.0 121.4 L1060.5 122.2 L1062.0 122.2 L1063.5 122.3 L1065.0 122.4 L1066.5 121.1 L1068.0 120.8 L1069.5 122.2 L1071.0 122.3 L1072.5 121.3 L1074.0 121.0 L1075.5 121.5 L1077.0 121.5 L1078.5 121.4 L1080.0 122.5 L1081.5 122.9 L1083.0 122.5 L1084.5 121.3 L1086.0 121.7 L1087.5 121.4 L1089.0 120.6 L1090.0 121.4 L1090.5 133.7 L1091.6 159.9 L1092.0 159.9 L1093.5 160.3 L1095.0 160.8 L1096.5 160.6 L1098.0 160.4 L1099.5 160.5 L1101.0 160.1 L1102.5 159.9 L1103.2 160.4 L1103.6 221.0 L1104.0 281.7 L1104.6 373.0 L1105.5 372.9 L1105.6 372.8 L1107.0 372.6 L1108.5 373.4 L1110.0 372.8 L1111.5 373.4 L1113.0 374.7 L1114.5 373.4 L1116.0 372.3 L1117.5 372.5 L1119.0 372.2 L1120.5 372.7 L1121.5 372.7 L1122.0 367.3 L1123.2 354.5 L1123.5 357.5 L1125.0 372.6 L1126.5 372.6 L1128.0 373.4 L1129.5 374.1 L1131.0 373.6 L1132.5 372.2 L1134.0 371.6 L1135.5 372.6 L1137.0 373.1 L1138.5 372.0 L1140.0 371.6 L1141.5 372.8 L1143.0 372.8 L1144.5 371.6 L1146.0 371.8 L1147.5 372.2 L1149.0 372.5 L1150.5 372.7 L1152.0 372.4 L1153.5 371.9 L1155.0 372.2 L1156.5 372.5 L1158.0 372.3 L1159.5 373.0 L1161.0 373.8 L1162.5 373.2 L1164.0 372.2 L1165.5 371.6 L1167.0 371.4 L1168.5 372.3 L1170.0 373.6 L1170.5 372.8 L1171.5 368.9 L1172.0 367.0 L1173.0 370.9 L1173.5 372.6 L1174.5 373.1 L1176.0 374.2 L1177.5 374.1 L1179.0 372.5 L1180.5 372.3 L1182.0 372.8 L1183.5 373.3 L1185.0 373.5 L1186.5 372.6 L1188.0 372.1 L1189.5 373.4 L1191.0 374.4 L1192.5 373.8 L1194.0 373.6 L1195.5 374.0 L1197.0 373.1 L1198.5 372.9 L1200.0 373.2 L1201.5 373.0 L1203.0 373.2 L1204.5 372.3 L1206.0 372.5 L1207.5 372.8 L1209.0 372.4 L1210.5 373.1 L1212.0 373.4 L1213.5 372.8 L1215.0 372.7 L1216.5 372.9 L1218.0 374.1 L1219.5 374.5 L1221.0 372.6 L1222.5 372.5 L1224.0 373.0 L1225.5 372.3 L1227.0 372.2 L1228.5 372.6 L1230.0 373.5 L1231.5 373.7 L1233.0 373.3 L1234.5 373.1 L1236.0 372.4 L1237.5 373.2 L1239.0 373.4 L1240.5 372.9 L1242.0 372.4 L1243.5 372.4 L1245.0 373.4 L1246.5 373.4 L1248.0 373.6 L1249.5 373.9 L1251.0 373.8 L1252.5 373.6 L1254.0 373.3 L1255.5 373.7 L1257.0 373.9 L1258.5 373.3 L1260.0 372.8 L1261.5 372.8 L1263.0 372.6 L1264.5 372.6 L1266.0 373.2 L1267.5 373.1 L1267.6 373.0" stroke="#f03040" stroke-width="1.3" fill="none" stroke-linejoin="round"/><text x="53.8" y="385.9" text-anchor="end" font-size="12" fill="#9a9a9a">0</text><text x="53.8" y="347.2" text-anchor="end" font-size="12" fill="#9a9a9a">2</text><text x="53.8" y="308.5" text-anchor="end" font-size="12" fill="#9a9a9a">4</text><text x="53.8" y="269.8" text-anchor="end" font-size="12" fill="#9a9a9a">6</text><text x="53.8" y="231.0" text-anchor="end" font-size="12" fill="#9a9a9a">8</text><text x="53.8" y="192.3" text-anchor="end" font-size="12" fill="#9a9a9a">10</text><text x="53.8" y="153.6" text-anchor="end" font-size="12" fill="#9a9a9a">12</text><text x="53.8" y="114.9" text-anchor="end" font-size="12" fill="#9a9a9a">14</text><text x="1279" y="385.1" font-size="12" fill="#9a9a9a">0</text><text x="1279" y="358.0" font-size="12" fill="#9a9a9a">10</text><text x="1279" y="330.9" font-size="12" fill="#9a9a9a">20</text><text x="1279" y="303.8" font-size="12" fill="#9a9a9a">30</text><text x="1279" y="276.7" font-size="12" fill="#9a9a9a">40</text><text x="1279" y="249.6" font-size="12" fill="#9a9a9a">50</text><text x="1279" y="222.5" font-size="12" fill="#9a9a9a">60</text><text x="1279" y="195.4" font-size="12" fill="#9a9a9a">70</text><text x="1279" y="168.3" font-size="12" fill="#9a9a9a">80</text><text x="1279" y="141.2" font-size="12" fill="#9a9a9a">90</text><text x="1279" y="114.1" font-size="12" fill="#9a9a9a">100</text><text transform="translate(29.2 246.9) rotate(-90)" text-anchor="middle" font-size="12" fill="#9a9a9a">Leistung [kW]</text><text transform="translate(1308.5 246.9) rotate(90)" text-anchor="middle" font-size="12" fill="#9a9a9a">SoC [%]</text><text transform="translate(73.4 401.6) rotate(-45)" text-anchor="end" font-size="12" fill="#9a9a9a">07:37</text><text transform="translate(135.6 401.6) rotate(-45)" text-anchor="end" font-size="12" fill="#9a9a9a">07:44</text><text transform="translate(206.0 401.6) rotate(-45)" text-anchor="end" font-size="12" fill="#9a9a9a">07:51</text><text transform="translate(276.3 401.6) rotate(-45)" text-anchor="end" font-size="12" fill="#9a9a9a">07:58</text><text transform="translate(346.7 401.6) rotate(-45)" text-anchor="end" font-size="12" fill="#9a9a9a">08:05</text><text transform="translate(417.0 401.6) rotate(-45)" text-anchor="end" font-size="12" fill="#9a9a9a">08:12</text><text transform="translate(487.4 401.6) rotate(-45)" text-anchor="end" font-size="12" fill="#9a9a9a">08:19</text><text transform="translate(557.8 401.6) rotate(-45)" text-anchor="end" font-size="12" fill="#9a9a9a">08:26</text><text transform="translate(628.1 401.6) rotate(-45)" text-anchor="end" font-size="12" fill="#9a9a9a">08:33</text><text transform="translate(698.5 401.6) rotate(-45)" text-anchor="end" font-size="12" fill="#9a9a9a">08:40</text><text transform="translate(768.8 401.6) rotate(-45)" text-anchor="end" font-size="12" fill="#9a9a9a">08:47</text><text transform="translate(839.2 401.6) rotate(-45)" text-anchor="end" font-size="12" fill="#9a9a9a">08:54</text><text transform="translate(909.6 401.6) rotate(-45)" text-anchor="end" font-size="12" fill="#9a9a9a">09:01</text><text transform="translate(979.9 401.6) rotate(-45)" text-anchor="end" font-size="12" fill="#9a9a9a">09:08</text><text transform="translate(1050.3 401.6) rotate(-45)" text-anchor="end" font-size="12" fill="#9a9a9a">09:15</text><text transform="translate(1120.6 401.6) rotate(-45)" text-anchor="end" font-size="12" fill="#9a9a9a">09:22</text><text transform="translate(1191.0 401.6) rotate(-45)" text-anchor="end" font-size="12" fill="#9a9a9a">09:29</text><text transform="translate(1261.4 401.6) rotate(-45)" text-anchor="end" font-size="12" fill="#9a9a9a">09:36</text><rect x="176.6" y="89.1" width="39.3" height="11.6" fill="rgba(245,110,125,0.5)" stroke="#f05565" stroke-width="1.2"/><text x="222.5" y="98.0" font-size="12" fill="#9a9a9a">EVU</text><rect x="257.3" y="89.6" width="38.3" height="10.6" fill="#c8c8c8" stroke="#333" stroke-width="2.2"/><text x="302.7" y="98.0" font-size="12" fill="#9a9a9a">Hausverbrauch</text><rect x="394.1" y="89.2" width="39.0" height="11.3" fill="#e6e6fa" stroke="#d4d4e6" stroke-width="1.5"/><text x="439.9" y="98.0" font-size="12" fill="#9a9a9a">LP ges.</text><rect x="491.8" y="89.2" width="39.0" height="11.3" fill="#ccffbb" stroke="#99ee77" stroke-width="1.5"/><text x="537.5" y="98.0" font-size="12" fill="#9a9a9a">PV ges.</text><rect x="589.8" y="89.5" width="38.5" height="10.8" fill="#5555ff" stroke="#2222ee" stroke-width="2"/><text x="635.3" y="98.0" font-size="12" fill="#9a9a9a">LP 3</text><rect x="670.4" y="89.6" width="38.3" height="10.6" fill="#e6e6e6" stroke="#7070ff" stroke-width="2.2" stroke-dasharray="10 5"/><text x="715.8" y="98.0" font-size="12" fill="#9a9a9a">EV SoC 1</text><rect x="778.7" y="89.6" width="38.3" height="10.6" fill="#e6e6e6" stroke="#7070ff" stroke-width="2.2" stroke-dasharray="10 5"/><text x="824.1" y="98.0" font-size="12" fill="#9a9a9a">EV SoC 2</text><rect x="887.5" y="89.2" width="39.0" height="11.3" fill="#f2ffc0" stroke="#f5c080" stroke-width="1.5"/><text x="933.2" y="98.0" font-size="12" fill="#9a9a9a">Speicher ges.</text><rect x="1017.2" y="89.6" width="38.3" height="10.6" fill="#f2ffc0" stroke="#f0a040" stroke-width="2.2" stroke-dasharray="10 5"/><text x="1062.6" y="98.0" font-size="12" fill="#9a9a9a">Speicher ges. SoC</text><path d="M462.8 141.4 H590.5 a6 6 0 0 1 6 6 V198.1 a6 6 0 0 1 -6 6 H462.8 a6 6 0 0 1 -6 -6 V178.2 L451.8 173.2 L456.8 168.2 V147.4 a6 6 0 0 1 6 -6 Z" fill="rgba(0,0,0,0.7)"/><text x="462.8" y="157.6" font-size="12" font-weight="bold" fill="#e6e6e6">20. Okt. 2023, 08:15:21</text><rect x="463.3" y="169.4" width="11" height="11" fill="#d8d8e8" stroke="#fff" stroke-width="1"/><text x="476.5" y="178.4" font-size="12" fill="#e6e6e6">LP ges.: 10,841</text><rect x="463.3" y="185.4" width="11" height="12" fill="#5858f8" stroke="#2a2ae0" stroke-width="1.4"/><text x="476.5" y="195.0" font-size="12" fill="#e6e6e6">LP 3: 10,841</text><circle cx="453.8" cy="173.3" r="2.6" fill="#1a1040"/></svg>
<!-- table header -->
<div class="abs" style="left:5px;top:441.5px;width:1329px;height:54px;background:#b6bcc8;border-radius:4px 4px 0 0"></div>
<div class="lbl b" style="left:16px;top:447.7px">Ladepunkt</div>
<div class="lbl b" style="left:345.5px;top:447.5px">Lademodus</div>
<div class="lbl b" style="left:345.5px;top:471.6px">Fahrzeug</div>
<div class="lbl b" style="left:675px;top:447.5px">Parameter</div>
<div class="lbl b" style="left:675px;top:471.6px">SoC</div>
<div class="lbl b" style="left:1004.5px;top:447.5px">geladen</div>
<!-- cp container -->
<div class="abs" style="left:5px;top:496.5px;width:1330px;height:506px;border:1px solid #3a3d40;border-radius:0 0 4px 4px"></div>
<div class="abs" style="left:6px;top:497.5px;width:1328px;height:53px;background:#d1d7e6;border-bottom:1px solid #bfc4cc"></div>
<div class="lbl b" style="left:16px;top:503.5px">openWB Pro</div>
<svg class="abs" style="left:114px;top:507.5px" width="10" height="13" viewBox="0 0 10 13"><rect x="2" y="0" width="1.6" height="3.5" fill="#f0883a"/><rect x="6.2" y="0" width="1.6" height="3.5" fill="#f0883a"/><path d="M0.5 3.5h9v2.2a4.5 4.5 0 0 1-3.6 4.4V12.5H4.1V10.1A4.5 4.5 0 0 1 0.5 5.7z" fill="#f0883a"/></svg>
<div class="lbl" style="left:345.5px;top:503.7px;color:#4f4f4f">Sofortladen</div>
<div class="lbl" style="left:345.5px;top:528.1px;color:#4f4f4f">Tesla</div>
<div class="lbl" style="left:675px;top:503.7px;color:#4f4f4f">0 W</div>
<svg class="abs" style="left:707.5px;top:505.5px" width="12" height="12" viewBox="0 0 12 12"><circle cx="6" cy="6" r="5.2" fill="none" stroke="#555" stroke-width="1"/><text x="6" y="9.2" text-anchor="middle" font-size="8.5" fill="#555" font-family="Liberation Sans">3</text></svg>
<div class="lbl" style="left:725px;top:503.7px;color:#4f4f4f">6 A</div>
<div class="lbl" style="left:675px;top:528.1px;color:#4f4f4f">0 %</div>
<svg class="abs" style="left:705px;top:527.5px" width="18" height="16" viewBox="0 0 18 16"><path d="M2 3.5h7.5l-1.8 1.8H3.8v8.9h8.9V10.3l1.8-1.8v7.5H2z" fill="#3e3e3e"/><path d="M6.3 8.3l7-7 2.9 2.9-7 7-3.6 0.7z" fill="#3e3e3e"/><path d="M14.2 0.4l0.9-0.4 2.5 2.5-.4.9z" fill="#3e3e3e"/></svg>
<div class="lbl" style="left:1004.5px;top:503.7px;color:#4f4f4f">0,0 kWh / 0,0 km</div>
<svg class="abs" style="left:1310px;top:505px" width="15" height="14" viewBox="0 0 15 14"><rect x="0" y="0" width="14.5" height="14" rx="1.8" fill="#4a4a4a"/><rect x="2.8" y="6" width="8.9" height="2" fill="#fff"/></svg>
<!-- alert -->
<div class="abs" style="left:10px;top:557px;width:1320px;height:49.5px;background:#d6ebf0;border:1px solid #c8e4eb;border-radius:4px"></div>
<svg class="abs" style="left:36.5px;top:574.5px" width="15" height="15" viewBox="0 0 15 15"><circle cx="7.5" cy="7.5" r="7.3" fill="#18475a"/><rect x="6.5" y="6.3" width="2.1" height="5" fill="#d6ebf0"/><rect x="5.6" y="10.5" width="3.8" height="1.2" fill="#d6ebf0"/><rect x="5.6" y="6.3" width="2.5" height="1.1" fill="#d6ebf0"/><circle cx="7.5" cy="4.1" r="1.25" fill="#d6ebf0"/></svg>
<div class="lbl" style="left:57px;top:573.8px;color:#1e5567">RFID ist nicht aktiviert.</div>
<!-- Ladepunkt sperren -->
<svg class="abs" style="left:15px;top:615px" width="15" height="16" viewBox="0 0 15 16"><path d="M3.2 6.5V4.6a4.3 4.3 0 0 1 8.6 0V6.5h-2.1V4.6a2.2 2.2 0 0 0-4.4 0V6.5z" fill="#3f3f3f"/><rect x="0.5" y="6.3" width="14" height="9.5" rx="1.4" fill="#3f3f3f"/></svg>
<div class="lbl" style="left:34px;top:614.9px">Ladepunkt sperren</div>
<div class="abs" style="left:455px;top:611px;width:870px;height:31px;background:#4fa74b;border:1px solid #48a044;border-radius:4px"></div>
<div class="abs" style="left:456px;top:612px;width:9.5px;height:29px;background:#fff;border-radius:3px"></div>
<div class="lbl" style="left:455px;width:870px;text-align:center;padding-left:8px;top:618.1px;font-size:14px;color:#fff;-webkit-text-stroke:0.3px #fff">Nein</div>
<div class="abs" style="left:15px;top:657.5px;width:1310px;height:1px;background:#e2e2e2"></div>
<!-- Fahrzeug -->
<svg class="abs" style="left:15px;top:687.5px" width="21" height="14" viewBox="0 0 21 14"><path d="M5 1.2a1.8 1.8 0 0 1 1.7-1.2h7.6a1.8 1.8 0 0 1 1.7 1.2L17.6 5H18.8a2.2 2.2 0 0 1 2.2 2.2V11.2H0V7.2A2.2 2.2 0 0 1 2.2 5H3.4z" fill="#3f3f3f"/><path d="M6.3 1.9h8.4l1.1 3.1H5.2z" fill="#fff"/><circle cx="4.3" cy="10.6" r="2.9" fill="#3f3f3f"/><circle cx="16.7" cy="10.6" r="2.9" fill="#3f3f3f"/><circle cx="4.3" cy="10.6" r="1.3" fill="#fff"/><circle cx="16.7" cy="10.6" r="1.3" fill="#fff"/><circle cx="3.2" cy="7.6" r="1.1" fill="#fff"/><circle cx="17.8" cy="7.6" r="1.1" fill="#fff"/></svg>
<div class="lbl" style="left:40px;top:685.5px">Fahrzeug</div>
<div class="abs" style="left:455px;top:675.5px;width:870px;height:30.5px;background:#fff;border:1px solid #ced4da;border-radius:4px"></div>
<div class="lbl" style="left:472px;top:686px;font-size:10.5px;line-height:12px;color:#222">Tesla</div>
<svg class="abs" style="left:1309px;top:687px" width="12" height="8" viewBox="0 0 12 8"><path d="M1.5 1.5L6 6l4.5-4.5" fill="none" stroke="#343a40" stroke-width="2"/></svg>
<!-- Lademodus -->
<div class="lbl" style="left:16px;top:727.5px">Lademodus</div>
<div class="abs" style="left:452px;top:714px;width:212px;height:44px;border-radius:6px;background:#e79aa3"></div>
<div class="abs" style="left:455px;top:717px;width:206px;height:38px;border-radius:4px 0 0 4px;background:#cd3446"></div>
<div class="abs" style="left:664px;top:717px;width:139px;height:38px;border:1px solid #4fa74b;border-left:none;background:#fff"></div>
<div class="abs" style="left:802px;top:717px;width:188px;height:38px;border:1px solid #397bff;background:#fff"></div>
<div class="abs" style="left:989.5px;top:717px;width:180px;height:38px;border:1px solid #6d747c;border-left:none;background:#fff"></div>
<div class="abs" style="left:1168.8px;top:717px;width:155.6px;height:38px;border:1px solid #343a40;border-radius:0 4px 4px 0;background:#fff"></div>
<div class="lbl" style="left:455px;width:206px;text-align:center;top:728.0px;color:#fff">Sofortladen</div>
<div class="lbl" style="left:663px;width:139px;text-align:center;top:728.0px;color:#4fa74b">PV</div>
<div class="lbl" style="left:802px;width:188px;text-align:center;top:728.0px;color:#397bff">Zielladen</div>
<div class="lbl" style="left:989.5px;width:180px;text-align:center;top:728.0px;color:#6d747c">Standby</div>
<div class="lbl" style="left:1169.5px;width:155px;text-align:center;top:728.0px;color:#343a40">Stop</div>
<!-- Prioritaet -->
<svg class="abs" style="left:15px;top:762.5px" width="18" height="17" viewBox="0 0 18 17"><path d="M9 0.3l2.6 5.4 5.9.8-4.3 4.1 1 5.9L9 13.7l-5.2 2.8 1-5.9L0.5 6.5l5.9-.8z" fill="#3f3f3f"/></svg>
<div class="lbl" style="left:38.5px;top:762.5px">Priorität</div>
<div class="abs" style="left:455px;top:759.5px;width:870px;height:30px;background:#cd3446;border-radius:4px"></div>
<div class="abs" style="left:456px;top:760.5px;width:9.5px;height:28px;background:#fff;border-radius:3px"></div>
<div class="lbl" style="left:455px;width:870px;text-align:center;padding-left:8px;top:766.1px;font-size:14px;color:#fff;-webkit-text-stroke:0.3px #fff">Nein</div>
<!-- Zeitladen -->
<svg class="abs" style="left:15px;top:797.5px" width="16" height="16" viewBox="0 0 16 16"><circle cx="8" cy="8" r="6.9" fill="none" stroke="#3f3f3f" stroke-width="1.7"/><path d="M8 3.8V8.3l2.8 2" fill="none" stroke="#3f3f3f" stroke-width="1.6"/></svg>
<div class="lbl" style="left:36px;top:797.6px">Zeitladen</div>
<div class="abs" style="left:455px;top:794.5px;width:870px;height:30.5px;background:#cd3446;border-radius:4px"></div>
<div class="abs" style="left:456px;top:795.5px;width:9.5px;height:28.5px;background:#fff;border-radius:3px"></div>
<div class="lbl" style="left:455px;width:870px;text-align:center;padding-left:8px;top:800.8px;font-size:14px;color:#fff;-webkit-text-stroke:0.3px #fff">Nein</div>
<div class="abs" style="left:15px;top:840.5px;width:1310px;height:1px;background:#e2e2e2"></div>
<!-- Einstellungen -->
<div class="lbl" style="left:15.5px;top:863.3px;font-size:32px;line-height:30px;color:#484848;-webkit-text-stroke:0.6px #484848">Einstellungen für "Sofortladen"</div>
<div class="lbl" style="left:15.6px;top:916.2px">Stromstärke</div>
<div class="abs" style="left:455px;top:917.5px;width:827px;height:8.5px;background:#efefef;border:1px solid #b4b4b4;border-radius:4.5px"></div>
<div class="abs" style="left:455px;top:917.5px;width:322px;height:8.5px;background:#3a78ff;border:1px solid #3a6ed8;border-radius:4.5px"></div>
<div class="abs" style="left:767.2px;top:914.6px;width:14.6px;height:14.6px;background:#3a78ff;border-radius:50%"></div>
<div class="lbl" style="left:1292.5px;top:914.8px">16 A</div>
<div class="lbl" style="left:15.6px;top:955.8px">Begrenzung</div>
<div class="abs" style="left:455px;top:945px;width:264px;height:37.5px;background:#48a0b5;border-radius:4px 0 0 4px"></div>
<div class="abs" style="left:719px;top:945px;width:278px;height:37.5px;border:1px solid #48a0b5;border-left:none;background:#fff"></div>
<div class="abs" style="left:996px;top:945px;width:329px;height:37.5px;border:1px solid #48a0b5;border-radius:0 4px 4px 0;background:#fff"></div>
<div class="lbl" style="left:455px;width:264px;text-align:center;top:955.8px;color:#fff">keine</div>
<div class="lbl" style="left:719px;width:278px;text-align:center;top:955.8px;color:#48a0b5">EV-SoC</div>
<div class="lbl" style="left:996px;width:329px;text-align:center;top:955.8px;color:#48a0b5">Energiemenge</div>
</body></html>
